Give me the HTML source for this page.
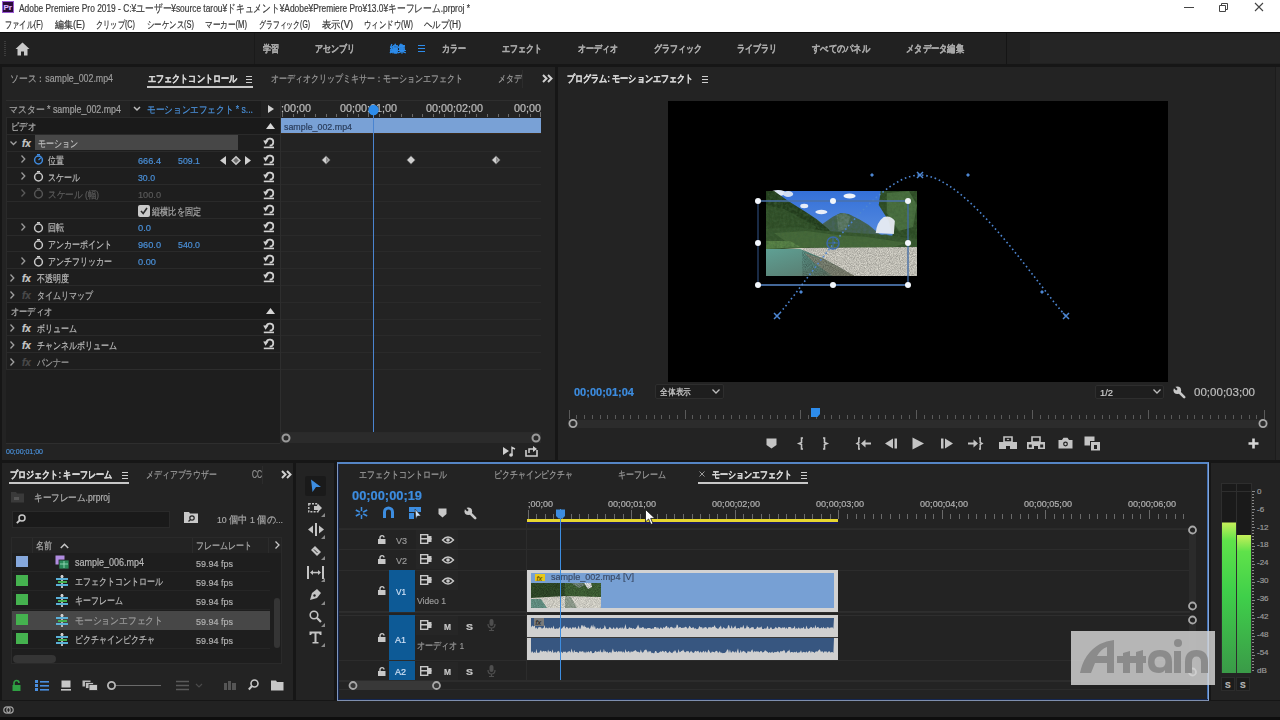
<!DOCTYPE html>
<html><head><meta charset="utf-8">
<style>
*{margin:0;padding:0;box-sizing:border-box}
html,body{width:1280px;height:720px;overflow:hidden;background:#161616;font-family:"Liberation Sans",sans-serif;position:relative}
.a{position:absolute}
.t{position:absolute;white-space:nowrap;line-height:1;transform-origin:0 50%;-webkit-text-stroke:0.2px currentColor}
svg{position:absolute;overflow:visible}
</style></head><body>

<div class="a" style="left:0px;top:0px;width:1280px;height:32px;background:#ffffff;"></div>
<div class="a" style="left:2px;top:1px;width:12px;height:12px;background:#2a0b3a;border:1px solid #9a5ad4"></div>
<div class="t" style="left:3.5px;top:3.7px;font-size:8px;color:#d9b2ff;font-weight:bold;">Pr</div>
<div class="t f" style="left:19px;top:3.0px;font-size:10.5px;color:#3a3a3a;--w:451;transform:scaleX(0.7970);">Adobe Premiere Pro 2019 - C:¥ユーザー¥source tarou¥ドキュメント¥Adobe¥Premiere Pro¥13.0¥キーフレーム.prproj *</div>
<div class="a" style="left:1184px;top:7px;width:10px;height:1px;background:#444;"></div>
<svg style="left:1218px;top:2px" width="11" height="11"><path d="M1.5 3.5H7.5V9.5H1.5Z" stroke="#444" fill="none"/><path d="M3.5 3.5V1.5H9.5V7.5H7.5" stroke="#444" fill="none"/></svg>
<svg style="left:1254px;top:2px" width="10" height="10"><path d="M1 1L9 9M9 1L1 9" stroke="#444" stroke-width="1.1"/></svg>
<div class="t f" style="left:5px;top:19.7px;font-size:10px;color:#333;--w:38;transform:scaleX(0.7200);">ファイル(F)</div>
<div class="t f" style="left:55px;top:19.7px;font-size:10px;color:#333;--w:30;transform:scaleX(0.8997);">編集(E)</div>
<div class="t f" style="left:96px;top:19.7px;font-size:10px;color:#333;--w:39;transform:scaleX(0.7237);">クリップ(C)</div>
<div class="t f" style="left:147px;top:19.7px;font-size:10px;color:#333;--w:47;transform:scaleX(0.7420);">シーケンス(S)</div>
<div class="t f" style="left:205px;top:19.7px;font-size:10px;color:#333;--w:42;transform:scaleX(0.7636);">マーカー(M)</div>
<div class="t f" style="left:259px;top:19.7px;font-size:10px;color:#333;--w:51;transform:scaleX(0.6850);">グラフィック(G)</div>
<div class="t f" style="left:322px;top:19.7px;font-size:10px;color:#333;--w:31;transform:scaleX(0.9297);">表示(V)</div>
<div class="t f" style="left:364px;top:19.7px;font-size:10px;color:#333;--w:49;transform:scaleX(0.7412);">ウィンドウ(W)</div>
<div class="t f" style="left:424px;top:19.7px;font-size:10px;color:#333;--w:37;transform:scaleX(0.8430);">ヘルプ(H)</div>
<div class="a" style="left:0px;top:32px;width:1280px;height:1px;background:#0c0c0c;"></div>
<div class="a" style="left:0px;top:33px;width:1280px;height:31px;background:#212121;"></div>
<div class="a" style="left:0px;top:64px;width:1280px;height:3px;background:#161616;"></div>
<div class="a" style="left:4px;top:41px;width:2px;height:1px;background:#3c3c3c;"></div>
<div class="a" style="left:4px;top:43px;width:2px;height:1px;background:#3c3c3c;"></div>
<div class="a" style="left:4px;top:45px;width:2px;height:1px;background:#3c3c3c;"></div>
<div class="a" style="left:4px;top:47px;width:2px;height:1px;background:#3c3c3c;"></div>
<div class="a" style="left:4px;top:49px;width:2px;height:1px;background:#3c3c3c;"></div>
<div class="a" style="left:4px;top:51px;width:2px;height:1px;background:#3c3c3c;"></div>
<div class="a" style="left:4px;top:53px;width:2px;height:1px;background:#3c3c3c;"></div>
<div class="a" style="left:4px;top:55px;width:2px;height:1px;background:#3c3c3c;"></div>
<svg style="left:15px;top:42px" width="16" height="14"><path d="M7.5 0.5L0.5 7H2.5V13.5H6V9.5H9V13.5H12.5V7H14.5Z" fill="#c9c9c9"/></svg>
<div class="a" style="left:254px;top:33px;width:1px;height:31px;background:#1a1a1a;"></div>
<div class="t f" style="left:263px;top:44.0px;font-size:9.5px;color:#a8a8a8;font-weight:bold;--w:16;transform:scaleX(0.8000);">学習</div>
<div class="t f" style="left:315px;top:44.0px;font-size:9.5px;color:#a8a8a8;font-weight:bold;--w:40;transform:scaleX(0.8000);">アセンブリ</div>
<div class="t f" style="left:390px;top:44.0px;font-size:9.5px;color:#2d8ceb;font-weight:bold;--w:16;transform:scaleX(0.8000);">編集</div>
<div class="t f" style="left:442px;top:44.0px;font-size:9.5px;color:#a8a8a8;font-weight:bold;--w:24;transform:scaleX(0.8000);">カラー</div>
<div class="t f" style="left:502px;top:44.0px;font-size:9.5px;color:#a8a8a8;font-weight:bold;--w:40;transform:scaleX(0.8000);">エフェクト</div>
<div class="t f" style="left:578px;top:44.0px;font-size:9.5px;color:#a8a8a8;font-weight:bold;--w:40;transform:scaleX(0.8000);">オーディオ</div>
<div class="t f" style="left:654px;top:44.0px;font-size:9.5px;color:#a8a8a8;font-weight:bold;--w:48;transform:scaleX(0.8000);">グラフィック</div>
<div class="t f" style="left:737px;top:44.0px;font-size:9.5px;color:#a8a8a8;font-weight:bold;--w:40;transform:scaleX(0.8000);">ライブラリ</div>
<div class="t f" style="left:812px;top:44.0px;font-size:9.5px;color:#a8a8a8;font-weight:bold;--w:58;transform:scaleX(0.8286);">すべてのパネル</div>
<div class="t f" style="left:906px;top:44.0px;font-size:9.5px;color:#a8a8a8;font-weight:bold;--w:58;transform:scaleX(0.8286);">メタデータ編集</div>
<div class="a" style="left:418px;top:44.5px;width:7px;height:1px;background:#2d8ceb;"></div>
<div class="a" style="left:418px;top:47.5px;width:7px;height:1px;background:#2d8ceb;"></div>
<div class="a" style="left:418px;top:50.5px;width:7px;height:1px;background:#2d8ceb;"></div>
<div class="a" style="left:1006px;top:33px;width:1px;height:31px;background:#151515;"></div>
<div class="a" style="left:1030px;top:34px;width:250px;height:29px;background:#252525;"></div>
<div class="a" style="left:2px;top:67px;width:553px;height:393px;background:#232323;"></div>
<div class="a" style="left:558px;top:67px;width:717px;height:393px;background:#232323;"></div>
<div class="a" style="left:1275px;top:67px;width:1px;height:393px;background:#1c1c1c;"></div>
<div class="a" style="left:1276px;top:67px;width:4px;height:393px;background:#262626;"></div>
<div class="a" style="left:2px;top:463px;width:291px;height:237px;background:#232323;"></div>
<div class="a" style="left:296px;top:463px;width:38px;height:237px;background:#232323;"></div>
<div class="a" style="left:337px;top:462px;width:872px;height:239px;background:#232323;border-left:1px solid #7f95bd;border-bottom:1px solid #7f8fae;border-right:1px solid #86a6d6;border-top:2px solid #5585c5;box-shadow:inset 1px -1px 0 #142650, inset -1px 0 0 #3f6fb5"></div>
<div class="a" style="left:1211px;top:463px;width:69px;height:237px;background:#232323;"></div>
<div class="a" style="left:0px;top:701px;width:1280px;height:16px;background:#222222;"></div>
<div class="a" style="left:0px;top:717px;width:1280px;height:3px;background:#0e0e0e;"></div>
<div class="t f" style="left:10px;top:73.7px;font-size:10px;color:#9a9a9a;--w:103;transform:scaleX(0.8825);">ソース：sample_002.mp4</div>
<div class="t f" style="left:148px;top:73.7px;font-size:10px;color:#d6d6d6;font-weight:bold;--w:89;transform:scaleX(0.8091);">エフェクトコントロール</div>
<div class="a" style="left:246px;top:75.5px;width:6px;height:1.2px;background:#cfcfcf;"></div>
<div class="a" style="left:246px;top:78.5px;width:6px;height:1.2px;background:#cfcfcf;"></div>
<div class="a" style="left:246px;top:81.5px;width:6px;height:1.2px;background:#cfcfcf;"></div>
<div class="a" style="left:147px;top:86px;width:106px;height:2px;background:#c8c8c8;"></div>
<div class="t f" style="left:271px;top:73.7px;font-size:10px;color:#9a9a9a;--w:192;transform:scaleX(0.8000);">オーディオクリップミキサー：モーションエフェクト</div>
<div class="t f" style="left:498px;top:73.7px;font-size:10px;color:#9a9a9a;--w:24;transform:scaleX(0.8000);">メタデ</div>
<div class="a" style="left:522px;top:70px;width:1px;height:18px;background:#2c2c2c;"></div>
<svg style="left:542px;top:74px" width="11" height="9"><path d="M1 1L4.5 4.5L1 8M6 1L9.5 4.5L6 8" stroke="#d0d0d0" stroke-width="2" fill="none"/></svg>
<div class="a" style="left:6px;top:100px;width:535px;height:1px;background:#2e2e2e;"></div>
<div class="a" style="left:6px;top:101px;width:274px;height:16px;background:#222222;"></div>
<div class="a" style="left:130px;top:101px;width:131px;height:16px;background:#1c1c1c;"></div>
<div class="t f" style="left:9px;top:104.7px;font-size:10px;color:#a0a0a0;--w:112;transform:scaleX(0.8877);">マスター * sample_002.mp4</div>
<svg style="left:133px;top:106px" width="8" height="6"><path d="M1 1L4 4L7 1" stroke="#bdbdbd" stroke-width="1.5" fill="none"/></svg>
<div class="t f" style="left:147px;top:104.7px;font-size:10px;color:#4a90d9;--w:106;transform:scaleX(0.8632);">モーションエフェクト * s...</div>
<svg style="left:268px;top:105px" width="6" height="8"><path d="M0 0L6 4L0 8Z" fill="#d0d0d0"/></svg>
<div class="a" style="left:6px;top:117px;width:274px;height:326px;background:#1e1e1e;"></div>
<div class="a" style="left:6px;top:117px;width:274px;height:17px;background:#1a1a1a;"></div>
<div class="a" style="left:6px;top:302px;width:274px;height:17px;background:#1a1a1a;"></div>
<div class="a" style="left:6px;top:117px;width:274px;height:1px;background:#2a2a2a;"></div>
<div class="a" style="left:6px;top:134px;width:274px;height:1px;background:#2a2a2a;"></div>
<div class="a" style="left:6px;top:151px;width:274px;height:1px;background:#2a2a2a;"></div>
<div class="a" style="left:6px;top:167px;width:274px;height:1px;background:#2a2a2a;"></div>
<div class="a" style="left:6px;top:184px;width:274px;height:1px;background:#2a2a2a;"></div>
<div class="a" style="left:6px;top:201px;width:274px;height:1px;background:#2a2a2a;"></div>
<div class="a" style="left:6px;top:218px;width:274px;height:1px;background:#2a2a2a;"></div>
<div class="a" style="left:6px;top:235px;width:274px;height:1px;background:#2a2a2a;"></div>
<div class="a" style="left:6px;top:251px;width:274px;height:1px;background:#2a2a2a;"></div>
<div class="a" style="left:6px;top:268px;width:274px;height:1px;background:#2a2a2a;"></div>
<div class="a" style="left:6px;top:285px;width:274px;height:1px;background:#2a2a2a;"></div>
<div class="a" style="left:6px;top:302px;width:274px;height:1px;background:#2a2a2a;"></div>
<div class="a" style="left:6px;top:319px;width:274px;height:1px;background:#2a2a2a;"></div>
<div class="a" style="left:6px;top:335px;width:274px;height:1px;background:#2a2a2a;"></div>
<div class="a" style="left:6px;top:352px;width:274px;height:1px;background:#2a2a2a;"></div>
<div class="a" style="left:6px;top:369px;width:274px;height:1px;background:#2a2a2a;"></div>
<div class="a" style="left:6px;top:117px;width:1px;height:326px;background:#2a2a2a;"></div>
<div class="t f" style="left:11px;top:122.0px;font-size:9.5px;color:#b5b5b5;--w:25;transform:scaleX(0.8333);">ビデオ</div>
<svg style="left:266px;top:123px" width="9" height="6"><path d="M0 6L4.5 0L9 6Z" fill="#d6d6d6"/></svg>
<div class="t f" style="left:11px;top:306.9px;font-size:9.5px;color:#b5b5b5;--w:41;transform:scaleX(0.8200);">オーディオ</div>
<svg style="left:266px;top:308px" width="9" height="6"><path d="M0 6L4.5 0L9 6Z" fill="#d6d6d6"/></svg>
<svg style="left:10px;top:141px" width="7" height="5"><path d="M0.5 0.5L3.5 3.5L6.5 0.5" stroke="#a0a0a0" stroke-width="1.3" fill="none"/></svg>
<div class="t" style="left:22px;top:138.7px;font-size:10px;color:#c8c8c8;font-weight:bold;font-family:"Liberation Serif",serif;letter-spacing:-0.5px"><i>fx</i></div>
<div class="a" style="left:35px;top:135px;width:203px;height:15px;background:#474747;"></div>
<div class="t f" style="left:38px;top:138.9px;font-size:9.5px;color:#bdbdbd;--w:40;transform:scaleX(0.8000);">モーション</div>
<svg style="left:263px;top:137px" width="12" height="12"><path d="M3.4 4.2A3.5 3.5 0 1 1 6.6 8.6" stroke="#d0d0d0" stroke-width="1.7" fill="none"/><path d="M0.2 3.6L5.6 3.2L2.6 7.8Z" fill="#d0d0d0"/><rect x="0.8" y="9.6" width="10.2" height="1.6" fill="#d0d0d0"/></svg>
<svg style="left:21px;top:155px" width="5" height="8"><path d="M0.5 0.5L3.8 4L0.5 7.5" stroke="#9a9a9a" stroke-width="1.3" fill="none"/></svg>
<svg style="left:33px;top:154px" width="11" height="11"><circle cx="5.5" cy="6" r="3.9" stroke="#3f8be0" stroke-width="1.5" fill="none"/><rect x="4" y="0" width="3" height="1.4" fill="#3f8be0"/><path d="M5.5 6L8 3.6" stroke="#3f8be0" stroke-width="1.3"/></svg>
<div class="t f" style="left:48px;top:155.9px;font-size:9.5px;color:#bdbdbd;--w:16;transform:scaleX(0.8000);">位置</div>
<div class="t f" style="left:138px;top:155.9px;font-size:9.5px;color:#4a90d9;--w:23;transform:scaleX(0.9671);">666.4</div>
<div class="t f" style="left:178px;top:155.9px;font-size:9.5px;color:#4a90d9;--w:22;transform:scaleX(0.9251);">509.1</div>
<svg style="left:220px;top:156px" width="32" height="9"><path d="M6 0L0 4.5L6 9Z" fill="#cfcfcf"/><path d="M16 0.8L19.8 4.5L16 8.2L12.2 4.5Z" fill="#6a6a6a" stroke="#c8c8c8" stroke-width="1.6"/><path d="M25 0L31 4.5L25 9Z" fill="#cfcfcf"/></svg>
<svg style="left:263px;top:154px" width="12" height="12"><path d="M3.4 4.2A3.5 3.5 0 1 1 6.6 8.6" stroke="#d0d0d0" stroke-width="1.7" fill="none"/><path d="M0.2 3.6L5.6 3.2L2.6 7.8Z" fill="#d0d0d0"/><rect x="0.8" y="9.6" width="10.2" height="1.6" fill="#d0d0d0"/></svg>
<svg style="left:21px;top:172px" width="5" height="8"><path d="M0.5 0.5L3.8 4L0.5 7.5" stroke="#9a9a9a" stroke-width="1.3" fill="none"/></svg>
<svg style="left:33px;top:171px" width="11" height="11"><circle cx="5.5" cy="6" r="3.9" stroke="#c8c8c8" stroke-width="1.5" fill="none"/><rect x="4" y="0" width="3" height="1.4" fill="#c8c8c8"/></svg>
<div class="t f" style="left:48px;top:172.9px;font-size:9.5px;color:#bdbdbd;--w:32;transform:scaleX(0.8000);">スケール</div>
<div class="t f" style="left:138px;top:172.9px;font-size:9.5px;color:#4a90d9;--w:17;transform:scaleX(0.9189);">30.0</div>
<svg style="left:263px;top:171px" width="12" height="12"><path d="M3.4 4.2A3.5 3.5 0 1 1 6.6 8.6" stroke="#d0d0d0" stroke-width="1.7" fill="none"/><path d="M0.2 3.6L5.6 3.2L2.6 7.8Z" fill="#d0d0d0"/><rect x="0.8" y="9.6" width="10.2" height="1.6" fill="#d0d0d0"/></svg>
<svg style="left:21px;top:189px" width="5" height="8"><path d="M0.5 0.5L3.8 4L0.5 7.5" stroke="#5a5a5a" stroke-width="1.3" fill="none"/></svg>
<svg style="left:33px;top:188px" width="11" height="11"><circle cx="5.5" cy="6" r="3.9" stroke="#555" stroke-width="1.5" fill="none"/><rect x="4" y="0" width="3" height="1.4" fill="#555"/></svg>
<div class="t f" style="left:48px;top:189.9px;font-size:9.5px;color:#5c5c5c;--w:51;transform:scaleX(0.8649);">スケール (幅)</div>
<div class="t f" style="left:138px;top:189.9px;font-size:9.5px;color:#5a5a5a;--w:23;transform:scaleX(0.9671);">100.0</div>
<svg style="left:263px;top:188px" width="12" height="12"><path d="M3.4 4.2A3.5 3.5 0 1 1 6.6 8.6" stroke="#d0d0d0" stroke-width="1.7" fill="none"/><path d="M0.2 3.6L5.6 3.2L2.6 7.8Z" fill="#d0d0d0"/><rect x="0.8" y="9.6" width="10.2" height="1.6" fill="#d0d0d0"/></svg>
<div class="a" style="left:138px;top:205px;width:12px;height:12px;background:#c9c9c9;border-radius:2px"></div>
<svg style="left:140px;top:207px" width="8" height="8"><path d="M1 4L3.2 6.5L7 1" stroke="#2a2a2a" stroke-width="1.6" fill="none"/></svg>
<div class="t f" style="left:152px;top:206.9px;font-size:9.5px;color:#a8a8a8;--w:49;transform:scaleX(0.8167);">縦横比を固定</div>
<svg style="left:263px;top:204px" width="12" height="12"><path d="M3.4 4.2A3.5 3.5 0 1 1 6.6 8.6" stroke="#d0d0d0" stroke-width="1.7" fill="none"/><path d="M0.2 3.6L5.6 3.2L2.6 7.8Z" fill="#d0d0d0"/><rect x="0.8" y="9.6" width="10.2" height="1.6" fill="#d0d0d0"/></svg>
<svg style="left:21px;top:223px" width="5" height="8"><path d="M0.5 0.5L3.8 4L0.5 7.5" stroke="#9a9a9a" stroke-width="1.3" fill="none"/></svg>
<svg style="left:33px;top:222px" width="11" height="11"><circle cx="5.5" cy="6" r="3.9" stroke="#c8c8c8" stroke-width="1.5" fill="none"/><rect x="4" y="0" width="3" height="1.4" fill="#c8c8c8"/></svg>
<div class="t f" style="left:48px;top:222.9px;font-size:9.5px;color:#bdbdbd;--w:16;transform:scaleX(0.8000);">回転</div>
<div class="t f" style="left:138px;top:222.9px;font-size:9.5px;color:#4a90d9;--w:13;transform:scaleX(0.9835);">0.0</div>
<svg style="left:263px;top:221px" width="12" height="12"><path d="M3.4 4.2A3.5 3.5 0 1 1 6.6 8.6" stroke="#d0d0d0" stroke-width="1.7" fill="none"/><path d="M0.2 3.6L5.6 3.2L2.6 7.8Z" fill="#d0d0d0"/><rect x="0.8" y="9.6" width="10.2" height="1.6" fill="#d0d0d0"/></svg>
<svg style="left:33px;top:239px" width="11" height="11"><circle cx="5.5" cy="6" r="3.9" stroke="#c8c8c8" stroke-width="1.5" fill="none"/><rect x="4" y="0" width="3" height="1.4" fill="#c8c8c8"/></svg>
<div class="t f" style="left:48px;top:239.9px;font-size:9.5px;color:#bdbdbd;--w:64;transform:scaleX(0.8000);">アンカーポイント</div>
<div class="t f" style="left:138px;top:239.9px;font-size:9.5px;color:#4a90d9;--w:23;transform:scaleX(0.9671);">960.0</div>
<div class="t f" style="left:178px;top:239.9px;font-size:9.5px;color:#4a90d9;--w:22;transform:scaleX(0.9251);">540.0</div>
<svg style="left:263px;top:238px" width="12" height="12"><path d="M3.4 4.2A3.5 3.5 0 1 1 6.6 8.6" stroke="#d0d0d0" stroke-width="1.7" fill="none"/><path d="M0.2 3.6L5.6 3.2L2.6 7.8Z" fill="#d0d0d0"/><rect x="0.8" y="9.6" width="10.2" height="1.6" fill="#d0d0d0"/></svg>
<svg style="left:21px;top:257px" width="5" height="8"><path d="M0.5 0.5L3.8 4L0.5 7.5" stroke="#9a9a9a" stroke-width="1.3" fill="none"/></svg>
<svg style="left:33px;top:256px" width="11" height="11"><circle cx="5.5" cy="6" r="3.9" stroke="#c8c8c8" stroke-width="1.5" fill="none"/><rect x="4" y="0" width="3" height="1.4" fill="#c8c8c8"/></svg>
<div class="t f" style="left:48px;top:256.9px;font-size:9.5px;color:#bdbdbd;--w:64;transform:scaleX(0.8000);">アンチフリッカー</div>
<div class="t f" style="left:138px;top:256.9px;font-size:9.5px;color:#4a90d9;--w:18;transform:scaleX(0.9730);">0.00</div>
<svg style="left:263px;top:254px" width="12" height="12"><path d="M3.4 4.2A3.5 3.5 0 1 1 6.6 8.6" stroke="#d0d0d0" stroke-width="1.7" fill="none"/><path d="M0.2 3.6L5.6 3.2L2.6 7.8Z" fill="#d0d0d0"/><rect x="0.8" y="9.6" width="10.2" height="1.6" fill="#d0d0d0"/></svg>
<svg style="left:10px;top:274px" width="5" height="8"><path d="M0.5 0.5L3.8 4L0.5 7.5" stroke="#a0a0a0" stroke-width="1.3" fill="none"/></svg>
<div class="t" style="left:22px;top:273.7px;font-size:10px;color:#c8c8c8;font-weight:bold;font-family:"Liberation Serif",serif;letter-spacing:-0.5px"><i>fx</i></div>
<div class="t f" style="left:37px;top:273.9px;font-size:9.5px;color:#bdbdbd;--w:32;transform:scaleX(0.8000);">不透明度</div>
<svg style="left:263px;top:271px" width="12" height="12"><path d="M3.4 4.2A3.5 3.5 0 1 1 6.6 8.6" stroke="#d0d0d0" stroke-width="1.7" fill="none"/><path d="M0.2 3.6L5.6 3.2L2.6 7.8Z" fill="#d0d0d0"/><rect x="0.8" y="9.6" width="10.2" height="1.6" fill="#d0d0d0"/></svg>
<svg style="left:10px;top:291px" width="5" height="8"><path d="M0.5 0.5L3.8 4L0.5 7.5" stroke="#a0a0a0" stroke-width="1.3" fill="none"/></svg>
<div class="t" style="left:22px;top:290.7px;font-size:10px;color:#4a4a4a;font-weight:bold;font-family:"Liberation Serif",serif;letter-spacing:-0.5px"><i>fx</i></div>
<div class="t f" style="left:37px;top:290.9px;font-size:9.5px;color:#b0b0b0;--w:56;transform:scaleX(0.8000);">タイムリマップ</div>
<svg style="left:10px;top:324px" width="5" height="8"><path d="M0.5 0.5L3.8 4L0.5 7.5" stroke="#a0a0a0" stroke-width="1.3" fill="none"/></svg>
<div class="t" style="left:22px;top:323.7px;font-size:10px;color:#c8c8c8;font-weight:bold;font-family:"Liberation Serif",serif;letter-spacing:-0.5px"><i>fx</i></div>
<div class="t f" style="left:37px;top:323.9px;font-size:9.5px;color:#bdbdbd;--w:40;transform:scaleX(0.8000);">ボリューム</div>
<svg style="left:263px;top:322px" width="12" height="12"><path d="M3.4 4.2A3.5 3.5 0 1 1 6.6 8.6" stroke="#d0d0d0" stroke-width="1.7" fill="none"/><path d="M0.2 3.6L5.6 3.2L2.6 7.8Z" fill="#d0d0d0"/><rect x="0.8" y="9.6" width="10.2" height="1.6" fill="#d0d0d0"/></svg>
<svg style="left:10px;top:341px" width="5" height="8"><path d="M0.5 0.5L3.8 4L0.5 7.5" stroke="#a0a0a0" stroke-width="1.3" fill="none"/></svg>
<div class="t" style="left:22px;top:340.7px;font-size:10px;color:#c8c8c8;font-weight:bold;font-family:"Liberation Serif",serif;letter-spacing:-0.5px"><i>fx</i></div>
<div class="t f" style="left:37px;top:340.9px;font-size:9.5px;color:#bdbdbd;--w:80;transform:scaleX(0.8000);">チャンネルボリューム</div>
<svg style="left:263px;top:338px" width="12" height="12"><path d="M3.4 4.2A3.5 3.5 0 1 1 6.6 8.6" stroke="#d0d0d0" stroke-width="1.7" fill="none"/><path d="M0.2 3.6L5.6 3.2L2.6 7.8Z" fill="#d0d0d0"/><rect x="0.8" y="9.6" width="10.2" height="1.6" fill="#d0d0d0"/></svg>
<svg style="left:10px;top:358px" width="5" height="8"><path d="M0.5 0.5L3.8 4L0.5 7.5" stroke="#a0a0a0" stroke-width="1.3" fill="none"/></svg>
<div class="t" style="left:22px;top:357.7px;font-size:10px;color:#4a4a4a;font-weight:bold;font-family:"Liberation Serif",serif;letter-spacing:-0.5px"><i>fx</i></div>
<div class="t f" style="left:37px;top:357.9px;font-size:9.5px;color:#9a9a9a;--w:32;transform:scaleX(0.8000);">パンナー</div>
<div class="a" style="left:22px;top:369px;width:258px;height:1px;background:#2d2d2d;"></div>
<div class="a" style="left:6px;top:370px;width:274px;height:73px;background:#1e1e1e;"></div>
<div class="a" style="left:6px;top:443px;width:274px;height:1px;background:#2e2e2e;"></div>
<div class="a" style="left:280px;top:432px;width:261px;height:1px;background:#2a2a2a;"></div>
<div class="a" style="left:280px;top:101px;width:261px;height:331px;background:#232323;"></div>
<div class="a" style="left:280px;top:101px;width:1px;height:342px;background:#2e2e2e;"></div>
<div class="t f" style="left:281px;top:103.7px;font-size:10px;color:#bdbdbd;--w:30;transform:scaleX(1.0787);">;00;00</div>
<div class="t f" style="left:340px;top:103.7px;font-size:10px;color:#bdbdbd;--w:57;transform:scaleX(1.0790);">00;00;01;00</div>
<div class="t f" style="left:426px;top:103.7px;font-size:10px;color:#bdbdbd;--w:57;transform:scaleX(1.0790);">00;00;02;00</div>
<div class="t f" style="left:514px;top:103.7px;font-size:10px;color:#bdbdbd;--w:27;transform:scaleX(1.0787);">00;00</div>
<div class="a" style="left:282px;top:112px;width:1px;height:5px;background:#6a6a6a;"></div>
<div class="a" style="left:293px;top:114px;width:1px;height:3px;background:#6a6a6a;"></div>
<div class="a" style="left:304px;top:114px;width:1px;height:3px;background:#6a6a6a;"></div>
<div class="a" style="left:315px;top:114px;width:1px;height:3px;background:#6a6a6a;"></div>
<div class="a" style="left:326px;top:114px;width:1px;height:3px;background:#6a6a6a;"></div>
<div class="a" style="left:336px;top:114px;width:1px;height:3px;background:#6a6a6a;"></div>
<div class="a" style="left:347px;top:114px;width:1px;height:3px;background:#6a6a6a;"></div>
<div class="a" style="left:358px;top:114px;width:1px;height:3px;background:#6a6a6a;"></div>
<div class="a" style="left:368px;top:112px;width:1px;height:5px;background:#6a6a6a;"></div>
<div class="a" style="left:379px;top:114px;width:1px;height:3px;background:#6a6a6a;"></div>
<div class="a" style="left:390px;top:114px;width:1px;height:3px;background:#6a6a6a;"></div>
<div class="a" style="left:401px;top:114px;width:1px;height:3px;background:#6a6a6a;"></div>
<div class="a" style="left:412px;top:114px;width:1px;height:3px;background:#6a6a6a;"></div>
<div class="a" style="left:422px;top:114px;width:1px;height:3px;background:#6a6a6a;"></div>
<div class="a" style="left:433px;top:114px;width:1px;height:3px;background:#6a6a6a;"></div>
<div class="a" style="left:444px;top:114px;width:1px;height:3px;background:#6a6a6a;"></div>
<div class="a" style="left:454px;top:112px;width:1px;height:5px;background:#6a6a6a;"></div>
<div class="a" style="left:465px;top:114px;width:1px;height:3px;background:#6a6a6a;"></div>
<div class="a" style="left:476px;top:114px;width:1px;height:3px;background:#6a6a6a;"></div>
<div class="a" style="left:487px;top:114px;width:1px;height:3px;background:#6a6a6a;"></div>
<div class="a" style="left:498px;top:114px;width:1px;height:3px;background:#6a6a6a;"></div>
<div class="a" style="left:508px;top:114px;width:1px;height:3px;background:#6a6a6a;"></div>
<div class="a" style="left:519px;top:114px;width:1px;height:3px;background:#6a6a6a;"></div>
<div class="a" style="left:530px;top:114px;width:1px;height:3px;background:#6a6a6a;"></div>
<div class="a" style="left:540px;top:112px;width:1px;height:5px;background:#6a6a6a;"></div>
<div class="a" style="left:281px;top:118px;width:260px;height:16px;background:#79a1d6;"></div>
<div class="a" style="left:281px;top:133px;width:260px;height:1px;background:#3a2a1a;"></div>
<div class="t f" style="left:284px;top:122.0px;font-size:9.5px;color:#2a3d5c;--w:68;transform:scaleX(0.9329);">sample_002.mp4</div>
<div class="a" style="left:281px;top:151px;width:260px;height:1px;background:#2a2a2a;"></div>
<div class="a" style="left:281px;top:167px;width:260px;height:1px;background:#2a2a2a;"></div>
<div class="a" style="left:281px;top:184px;width:260px;height:1px;background:#2a2a2a;"></div>
<div class="a" style="left:281px;top:201px;width:260px;height:1px;background:#2a2a2a;"></div>
<div class="a" style="left:281px;top:218px;width:260px;height:1px;background:#2a2a2a;"></div>
<div class="a" style="left:281px;top:235px;width:260px;height:1px;background:#2a2a2a;"></div>
<div class="a" style="left:281px;top:251px;width:260px;height:1px;background:#2a2a2a;"></div>
<div class="a" style="left:281px;top:268px;width:260px;height:1px;background:#2a2a2a;"></div>
<div class="a" style="left:281px;top:285px;width:260px;height:1px;background:#2a2a2a;"></div>
<div class="a" style="left:281px;top:302px;width:260px;height:1px;background:#2a2a2a;"></div>
<div class="a" style="left:281px;top:319px;width:260px;height:1px;background:#2a2a2a;"></div>
<div class="a" style="left:281px;top:335px;width:260px;height:1px;background:#2a2a2a;"></div>
<div class="a" style="left:281px;top:352px;width:260px;height:1px;background:#2a2a2a;"></div>
<div class="a" style="left:281px;top:369px;width:260px;height:1px;background:#2a2a2a;"></div>
<svg style="left:321px;top:155px" width="10" height="10"><path d="M5 0.5L9.5 5L5 9.5L0.5 5Z" fill="#cfcfcf" stroke="#1a1a1a" stroke-width="0.8"/><path d="M5 2L5 8L8 5Z" fill="#8a8a8a"/></svg>
<svg style="left:406px;top:155px" width="10" height="10"><path d="M5 0.5L9.5 5L5 9.5L0.5 5Z" fill="#cfcfcf" stroke="#1a1a1a" stroke-width="0.8"/></svg>
<svg style="left:491px;top:155px" width="10" height="10"><path d="M5 0.5L9.5 5L5 9.5L0.5 5Z" fill="#cfcfcf" stroke="#1a1a1a" stroke-width="0.8"/><path d="M5 2L5 8L8 5Z" fill="#8a8a8a"/></svg>
<div class="a" style="left:373px;top:112px;width:1px;height:320px;background:#4a84d0;"></div>
<svg style="left:367px;top:104px" width="13" height="12"><circle cx="6.5" cy="6" r="5.2" fill="#2d8ceb"/></svg>
<div class="a" style="left:280px;top:433px;width:261px;height:10px;background:#2b2b2b;"></div>
<svg style="left:281px;top:433px" width="260" height="11"><circle cx="5" cy="5" r="3.5" stroke="#9a9a9a" stroke-width="2" fill="none"/><circle cx="255" cy="5" r="3.5" stroke="#9a9a9a" stroke-width="2" fill="none"/></svg>
<div class="t f" style="left:6px;top:447.7px;font-size:8px;color:#4a90d9;--w:37;transform:scaleX(0.8754);">00;00;01;00</div>
<svg style="left:503px;top:446px" width="14" height="11"><path d="M0 1L6 5L0 9Z" fill="#cfcfcf"/><path d="M9 9.5V1.5L12 3" stroke="#cfcfcf" stroke-width="1.4" fill="none"/><circle cx="8" cy="9" r="1.8" fill="#cfcfcf"/></svg>
<svg style="left:525px;top:445px" width="13" height="12"><path d="M1 5V11H12V5" stroke="#cfcfcf" stroke-width="1.6" fill="none"/><path d="M4 8V4H9" stroke="#cfcfcf" stroke-width="1.5" fill="none"/><path d="M8 1L12 4L8 7Z" fill="#cfcfcf"/></svg>
<div class="t f" style="left:567px;top:73.7px;font-size:10px;color:#d6d6d6;font-weight:bold;--w:126;transform:scaleX(0.8071);">プログラム: モーションエフェクト</div>
<div class="a" style="left:702px;top:75.5px;width:6px;height:1.2px;background:#cfcfcf;"></div>
<div class="a" style="left:702px;top:78.5px;width:6px;height:1.2px;background:#cfcfcf;"></div>
<div class="a" style="left:702px;top:81.5px;width:6px;height:1.2px;background:#cfcfcf;"></div>
<div class="a" style="left:668px;top:101px;width:500px;height:281px;background:#000000;"></div>
<svg style="left:766px;top:191px" width="151" height="85" viewBox="0 0 150 85" preserveAspectRatio="none">
<defs>
<linearGradient id="sky" x1="0" y1="0" x2="0" y2="1"><stop offset="0" stop-color="#3470d8"/><stop offset="0.6" stop-color="#5a8ee0"/><stop offset="1" stop-color="#9ab8e6"/></linearGradient>
<linearGradient id="riv" x1="0" y1="0" x2="1" y2="1"><stop offset="0" stop-color="#5fa094"/><stop offset="0.6" stop-color="#5a8478"/><stop offset="1" stop-color="#6a6e5c"/></linearGradient>
<filter id="nz" x="0" y="0" width="1" height="1"><feTurbulence type="fractalNoise" baseFrequency="1.1" numOctaves="2" seed="3"/><feColorMatrix type="matrix" values="0 0 0 0 0  0 0 0 0 0  0 0 0 0 0  0 0 0 1.2 -0.3"/><feComposite in2="SourceGraphic" operator="in"/></filter>
<filter id="nz2" x="0" y="0" width="1" height="1"><feTurbulence type="fractalNoise" baseFrequency="0.35" numOctaves="2" seed="9"/><feColorMatrix type="matrix" values="0 0 0 0 0.05  0 0 0 0 0.12  0 0 0 0 0.04  0 0 0 1.4 -0.45"/><feComposite in2="SourceGraphic" operator="in"/></filter>
</defs>
<rect width="150" height="85" fill="url(#sky)"/>
<ellipse cx="12" cy="2" rx="8" ry="3" fill="#dfe8f6"/><ellipse cx="22" cy="3" rx="5" ry="3" fill="#d0ddf2"/>
<ellipse cx="83" cy="5" rx="6" ry="2.6" fill="#eef3fb"/>
<ellipse cx="38" cy="15" rx="4" ry="2.2" fill="#e6ecf7"/><ellipse cx="55" cy="21" rx="6" ry="2.2" fill="#e9eef8"/>
<path d="M56 33 L66 26 L74 22 L82 23 L92 28 L102 34 L114 44 L60 48Z" fill="#45625a"/>
<path d="M70 24 L78 22 L84 26 L80 38 L72 40Z" fill="#5f7a6c"/>
<path d="M0 0 L8 0 L22 10 L38 20 L50 28 L62 38 L70 48 L0 52Z" fill="#223c1c"/>
<path d="M0 14 L18 18 L36 28 L50 36 L40 52 L0 54Z" fill="#2e4c26"/>
<path d="M114 0 L150 0 L150 64 L110 60 L126 44 L122 30 L112 14Z" fill="#2c4a24"/>
<path d="M120 2 L142 0 L150 14 L146 36 L132 40 L120 22Z" fill="#4a7040"/>
<path d="M0 38 L30 36 L60 40 L90 42 L120 44 L150 48 L150 60 L0 60Z" fill="#34542c"/>
<path d="M8 42 L40 40 L70 44 L100 46 L140 52 L120 58 L30 58Z" fill="#46693a"/>
<path d="M0 50 L24 50 L34 56 L0 58Z" fill="#5a8448"/>
<clipPath id="fc"><path d="M0 0 L8 0 L22 10 L38 20 L50 28 L58 34 L66 26 L74 22 L82 23 L92 28 L102 34 L110 44 L124 42 L122 30 L112 14 L114 0 L150 0 L150 60 L0 60Z"/></clipPath><rect x="0" y="0" width="150" height="60" fill="#000" filter="url(#nz2)" opacity="0.9" clip-path="url(#fc)"/>
<path d="M109 42 Q110 31 117 26 Q124 24 128 30 L127 43Z" fill="#e8ecf2" opacity="0.95"/>
<path d="M0 59 L36 57 L150 56 L150 85 L0 85Z" fill="#d8d6cc"/>
<path d="M0 58 L34 58 L58 68 L88 85 L0 85Z" fill="url(#riv)"/>
<path d="M38 62 L58 68 L88 85 L66 85 L48 72Z" fill="#8a8a78" opacity="0.8"/>
<rect x="36" y="56" width="114" height="29" fill="#6a6a60" filter="url(#nz)" opacity="0.4"/>
</svg>
<svg style="left:668px;top:101px" width="500" height="281" viewBox="668 101 500 281">
<path d="M777 316 C801 292 872 175 920 175 C968 175 1042 292 1066 316" stroke="#4d86d2" stroke-width="1.6" fill="none" stroke-dasharray="1.6 2.8"/>
<path d="M758 201H908" stroke="#4a72aa" stroke-width="1.3"/>
<path d="M908 201V285" stroke="#3f6aa6" stroke-width="1.3"/>
<path d="M758 285H908" stroke="#5a8acb" stroke-width="1.5"/>
<path d="M758 201V285" stroke="#22395c" stroke-width="1.5"/>
<circle cx="833" cy="243" r="6" stroke="#3a68a8" stroke-width="1.5" fill="none"/>
<path d="M827 243H839M833 237V249" stroke="#3a68a8" stroke-width="1"/>
<g fill="#f2f6fb">
<circle cx="758" cy="201" r="3"/><circle cx="833" cy="201" r="3"/><circle cx="908" cy="201" r="3"/>
<circle cx="758" cy="243" r="3"/><circle cx="908" cy="243" r="3"/>
<circle cx="758" cy="285" r="3"/><circle cx="833" cy="285" r="3"/><circle cx="908" cy="285" r="3"/>
</g>
<g fill="#4d86d2">
<path d="M872 173L874 175L872 177L870 175Z"/><path d="M968 173L970 175L968 177L966 175Z"/>
<path d="M801 290L803 292L801 294L799 292Z"/><path d="M1042 290L1044 292L1042 294L1040 292Z"/>
</g>
<g stroke="#4d86d2" stroke-width="1.5"><path d="M774 313L780 319M780 313L774 319"/><path d="M1063 313L1069 319M1069 313L1063 319"/><path d="M917 172L923 178M923 172L917 178"/></g>
</svg>
<div class="t f" style="left:574px;top:387.2px;font-size:11px;color:#3d8de0;font-weight:bold;--w:60;transform:scaleX(1.0010);">00;00;01;04</div>
<div class="a" style="left:655px;top:384px;width:69px;height:15px;background:#1e1e1e;border:1px solid #2e2e2e;border-radius:2px"></div>
<div class="t f" style="left:660px;top:388.2px;font-size:9px;color:#d0d0d0;--w:31;transform:scaleX(0.8611);">全体表示</div>
<svg style="left:712px;top:389px" width="8" height="5"><path d="M0.5 0.5L4 4L7.5 0.5" stroke="#bdbdbd" stroke-width="1.3" fill="none"/></svg>
<div class="a" style="left:1095px;top:385px;width:69px;height:14px;background:#1e1e1e;border:1px solid #2e2e2e;border-radius:2px"></div>
<div class="t f" style="left:1100px;top:387.9px;font-size:9.5px;color:#d0d0d0;--w:13;transform:scaleX(0.9835);">1/2</div>
<svg style="left:1153px;top:389px" width="8" height="5"><path d="M0.5 0.5L4 4L7.5 0.5" stroke="#bdbdbd" stroke-width="1.3" fill="none"/></svg>
<svg style="left:1173px;top:386px" width="13" height="13"><path d="M6 6L11.2 11.2" stroke="#c8c8c8" stroke-width="2.6" stroke-linecap="round"/><circle cx="4.3" cy="4.3" r="3.8" fill="#c8c8c8"/><path d="M0 1.2L3.2 4.4L4.6 3L1.4 -0.2Z" fill="#232323"/></svg>
<div class="t f" style="left:1194px;top:387.2px;font-size:11px;color:#bdbdbd;--w:61;transform:scaleX(1.0495);">00;00;03;00</div>
<div class="a" style="left:569px;top:410px;width:1px;height:9px;background:#5a5a5a;"></div>
<div class="a" style="left:576px;top:415px;width:1px;height:4px;background:#5a5a5a;"></div>
<div class="a" style="left:584px;top:415px;width:1px;height:4px;background:#5a5a5a;"></div>
<div class="a" style="left:592px;top:415px;width:1px;height:4px;background:#5a5a5a;"></div>
<div class="a" style="left:600px;top:415px;width:1px;height:4px;background:#5a5a5a;"></div>
<div class="a" style="left:607px;top:415px;width:1px;height:4px;background:#5a5a5a;"></div>
<div class="a" style="left:615px;top:415px;width:1px;height:4px;background:#5a5a5a;"></div>
<div class="a" style="left:623px;top:415px;width:1px;height:4px;background:#5a5a5a;"></div>
<div class="a" style="left:630px;top:415px;width:1px;height:4px;background:#5a5a5a;"></div>
<div class="a" style="left:638px;top:415px;width:1px;height:4px;background:#5a5a5a;"></div>
<div class="a" style="left:646px;top:415px;width:1px;height:4px;background:#5a5a5a;"></div>
<div class="a" style="left:654px;top:415px;width:1px;height:4px;background:#5a5a5a;"></div>
<div class="a" style="left:661px;top:415px;width:1px;height:4px;background:#5a5a5a;"></div>
<div class="a" style="left:669px;top:415px;width:1px;height:4px;background:#5a5a5a;"></div>
<div class="a" style="left:677px;top:415px;width:1px;height:4px;background:#5a5a5a;"></div>
<div class="a" style="left:685px;top:410px;width:1px;height:9px;background:#5a5a5a;"></div>
<div class="a" style="left:692px;top:415px;width:1px;height:4px;background:#5a5a5a;"></div>
<div class="a" style="left:700px;top:415px;width:1px;height:4px;background:#5a5a5a;"></div>
<div class="a" style="left:708px;top:415px;width:1px;height:4px;background:#5a5a5a;"></div>
<div class="a" style="left:715px;top:415px;width:1px;height:4px;background:#5a5a5a;"></div>
<div class="a" style="left:723px;top:415px;width:1px;height:4px;background:#5a5a5a;"></div>
<div class="a" style="left:731px;top:415px;width:1px;height:4px;background:#5a5a5a;"></div>
<div class="a" style="left:739px;top:415px;width:1px;height:4px;background:#5a5a5a;"></div>
<div class="a" style="left:746px;top:415px;width:1px;height:4px;background:#5a5a5a;"></div>
<div class="a" style="left:754px;top:415px;width:1px;height:4px;background:#5a5a5a;"></div>
<div class="a" style="left:762px;top:415px;width:1px;height:4px;background:#5a5a5a;"></div>
<div class="a" style="left:770px;top:415px;width:1px;height:4px;background:#5a5a5a;"></div>
<div class="a" style="left:777px;top:415px;width:1px;height:4px;background:#5a5a5a;"></div>
<div class="a" style="left:785px;top:415px;width:1px;height:4px;background:#5a5a5a;"></div>
<div class="a" style="left:793px;top:415px;width:1px;height:4px;background:#5a5a5a;"></div>
<div class="a" style="left:800px;top:410px;width:1px;height:9px;background:#5a5a5a;"></div>
<div class="a" style="left:808px;top:415px;width:1px;height:4px;background:#5a5a5a;"></div>
<div class="a" style="left:816px;top:415px;width:1px;height:4px;background:#5a5a5a;"></div>
<div class="a" style="left:824px;top:415px;width:1px;height:4px;background:#5a5a5a;"></div>
<div class="a" style="left:831px;top:415px;width:1px;height:4px;background:#5a5a5a;"></div>
<div class="a" style="left:839px;top:415px;width:1px;height:4px;background:#5a5a5a;"></div>
<div class="a" style="left:847px;top:415px;width:1px;height:4px;background:#5a5a5a;"></div>
<div class="a" style="left:854px;top:415px;width:1px;height:4px;background:#5a5a5a;"></div>
<div class="a" style="left:862px;top:415px;width:1px;height:4px;background:#5a5a5a;"></div>
<div class="a" style="left:870px;top:415px;width:1px;height:4px;background:#5a5a5a;"></div>
<div class="a" style="left:878px;top:415px;width:1px;height:4px;background:#5a5a5a;"></div>
<div class="a" style="left:885px;top:415px;width:1px;height:4px;background:#5a5a5a;"></div>
<div class="a" style="left:893px;top:415px;width:1px;height:4px;background:#5a5a5a;"></div>
<div class="a" style="left:901px;top:415px;width:1px;height:4px;background:#5a5a5a;"></div>
<div class="a" style="left:909px;top:415px;width:1px;height:4px;background:#5a5a5a;"></div>
<div class="a" style="left:916px;top:410px;width:1px;height:9px;background:#5a5a5a;"></div>
<div class="a" style="left:924px;top:415px;width:1px;height:4px;background:#5a5a5a;"></div>
<div class="a" style="left:932px;top:415px;width:1px;height:4px;background:#5a5a5a;"></div>
<div class="a" style="left:939px;top:415px;width:1px;height:4px;background:#5a5a5a;"></div>
<div class="a" style="left:947px;top:415px;width:1px;height:4px;background:#5a5a5a;"></div>
<div class="a" style="left:955px;top:415px;width:1px;height:4px;background:#5a5a5a;"></div>
<div class="a" style="left:963px;top:415px;width:1px;height:4px;background:#5a5a5a;"></div>
<div class="a" style="left:970px;top:415px;width:1px;height:4px;background:#5a5a5a;"></div>
<div class="a" style="left:978px;top:415px;width:1px;height:4px;background:#5a5a5a;"></div>
<div class="a" style="left:986px;top:415px;width:1px;height:4px;background:#5a5a5a;"></div>
<div class="a" style="left:994px;top:415px;width:1px;height:4px;background:#5a5a5a;"></div>
<div class="a" style="left:1001px;top:415px;width:1px;height:4px;background:#5a5a5a;"></div>
<div class="a" style="left:1009px;top:415px;width:1px;height:4px;background:#5a5a5a;"></div>
<div class="a" style="left:1017px;top:415px;width:1px;height:4px;background:#5a5a5a;"></div>
<div class="a" style="left:1024px;top:415px;width:1px;height:4px;background:#5a5a5a;"></div>
<div class="a" style="left:1032px;top:410px;width:1px;height:9px;background:#5a5a5a;"></div>
<div class="a" style="left:1040px;top:415px;width:1px;height:4px;background:#5a5a5a;"></div>
<div class="a" style="left:1048px;top:415px;width:1px;height:4px;background:#5a5a5a;"></div>
<div class="a" style="left:1055px;top:415px;width:1px;height:4px;background:#5a5a5a;"></div>
<div class="a" style="left:1063px;top:415px;width:1px;height:4px;background:#5a5a5a;"></div>
<div class="a" style="left:1071px;top:415px;width:1px;height:4px;background:#5a5a5a;"></div>
<div class="a" style="left:1079px;top:415px;width:1px;height:4px;background:#5a5a5a;"></div>
<div class="a" style="left:1086px;top:415px;width:1px;height:4px;background:#5a5a5a;"></div>
<div class="a" style="left:1094px;top:415px;width:1px;height:4px;background:#5a5a5a;"></div>
<div class="a" style="left:1102px;top:415px;width:1px;height:4px;background:#5a5a5a;"></div>
<div class="a" style="left:1109px;top:415px;width:1px;height:4px;background:#5a5a5a;"></div>
<div class="a" style="left:1117px;top:415px;width:1px;height:4px;background:#5a5a5a;"></div>
<div class="a" style="left:1125px;top:415px;width:1px;height:4px;background:#5a5a5a;"></div>
<div class="a" style="left:1133px;top:415px;width:1px;height:4px;background:#5a5a5a;"></div>
<div class="a" style="left:1140px;top:415px;width:1px;height:4px;background:#5a5a5a;"></div>
<div class="a" style="left:1148px;top:410px;width:1px;height:9px;background:#5a5a5a;"></div>
<div class="a" style="left:1156px;top:415px;width:1px;height:4px;background:#5a5a5a;"></div>
<div class="a" style="left:1164px;top:415px;width:1px;height:4px;background:#5a5a5a;"></div>
<div class="a" style="left:1171px;top:415px;width:1px;height:4px;background:#5a5a5a;"></div>
<div class="a" style="left:1179px;top:415px;width:1px;height:4px;background:#5a5a5a;"></div>
<div class="a" style="left:1187px;top:415px;width:1px;height:4px;background:#5a5a5a;"></div>
<div class="a" style="left:1194px;top:415px;width:1px;height:4px;background:#5a5a5a;"></div>
<div class="a" style="left:1202px;top:415px;width:1px;height:4px;background:#5a5a5a;"></div>
<div class="a" style="left:1210px;top:415px;width:1px;height:4px;background:#5a5a5a;"></div>
<div class="a" style="left:1218px;top:415px;width:1px;height:4px;background:#5a5a5a;"></div>
<div class="a" style="left:1225px;top:415px;width:1px;height:4px;background:#5a5a5a;"></div>
<div class="a" style="left:1233px;top:415px;width:1px;height:4px;background:#5a5a5a;"></div>
<div class="a" style="left:1241px;top:415px;width:1px;height:4px;background:#5a5a5a;"></div>
<div class="a" style="left:1249px;top:415px;width:1px;height:4px;background:#5a5a5a;"></div>
<div class="a" style="left:1256px;top:415px;width:1px;height:4px;background:#5a5a5a;"></div>
<div class="a" style="left:1264px;top:410px;width:1px;height:9px;background:#5a5a5a;"></div>
<div class="a" style="left:568px;top:420px;width:700px;height:8px;background:#2c2c2c;"></div>
<svg style="left:567px;top:418px" width="702" height="12"><circle cx="6" cy="5.5" r="3.6" stroke="#a8a8a8" stroke-width="1.8" fill="#2c2c2c"/><circle cx="696" cy="5.5" r="3.6" stroke="#a8a8a8" stroke-width="1.8" fill="#2c2c2c"/></svg>
<svg style="left:810px;top:407px" width="12" height="11"><path d="M1 1H10V7L7.5 10H1Z" fill="#2d8ceb"/></svg>
<svg style="left:766px;top:438px" width="11" height="11"><path d="M0.5 0.5H10.5V7L5.5 10.5L0.5 7Z" fill="#c4c4c4"/></svg>
<svg style="left:798px;top:437px" width="7" height="13"><path d="M5 1H3.5V5.5L1 6.5L3.5 7.5V12H5" stroke="#c4c4c4" stroke-width="1.6" fill="none"/></svg>
<svg style="left:822px;top:437px" width="7" height="13"><path d="M1 1H2.5V5.5L5 6.5L2.5 7.5V12H1" stroke="#c4c4c4" stroke-width="1.6" fill="none"/></svg>
<svg style="left:857px;top:437px" width="15" height="13"><path d="M3 1H1.8V5.5L0 6.5L1.8 7.5V12H3" stroke="#c4c4c4" stroke-width="1.5" fill="none"/><path d="M4 6.5L8.5 2.5V10.5Z" fill="#c4c4c4"/><rect x="8" y="5.5" width="6" height="2" fill="#c4c4c4"/></svg>
<svg style="left:885px;top:438px" width="13" height="11"><path d="M0 5.5L8 0.5V10.5Z" fill="#c4c4c4"/><rect x="9.5" y="0.5" width="2.5" height="10" fill="#c4c4c4"/></svg>
<svg style="left:912px;top:437px" width="13" height="13"><path d="M0.5 0.5L12 6.5L0.5 12.5Z" fill="#c4c4c4"/></svg>
<svg style="left:941px;top:438px" width="13" height="11"><rect x="0" y="0.5" width="2.5" height="10" fill="#c4c4c4"/><path d="M4 0.5L12 5.5L4 10.5Z" fill="#c4c4c4"/></svg>
<svg style="left:967px;top:437px" width="15" height="13"><path d="M12 1H13.2V5.5L15 6.5L13.2 7.5V12H12" stroke="#c4c4c4" stroke-width="1.5" fill="none"/><path d="M11 6.5L6.5 2.5V10.5Z" fill="#c4c4c4"/><rect x="1" y="5.5" width="6" height="2" fill="#c4c4c4"/></svg>
<svg style="left:999px;top:436px" width="19" height="14"><path d="M5 1H13V6H5Z" fill="none" stroke="#c4c4c4" stroke-width="1.6"/><path d="M0 6H18V13H11V10H7V13H0Z" fill="#c4c4c4"/><path d="M7.5 4L9 2.5L10.5 4Z" fill="#c4c4c4"/></svg>
<svg style="left:1027px;top:436px" width="19" height="14"><path d="M5 1H13V6H5Z" fill="none" stroke="#c4c4c4" stroke-width="1.6"/><path d="M0 6H18V13H11V10H7V13H0Z" fill="#c4c4c4"/><rect x="1.8" y="8.5" width="3" height="3" fill="#232323"/><rect x="13.2" y="8.5" width="3" height="3" fill="#232323"/></svg>
<svg style="left:1058px;top:437px" width="15" height="12"><path d="M0.5 3H4L5.5 0.8H9.5L11 3H14.5V11.5H0.5Z" fill="#c4c4c4"/><circle cx="7.5" cy="7" r="2.4" fill="#232323"/><circle cx="7.5" cy="7" r="1.2" fill="#c4c4c4"/></svg>
<svg style="left:1084px;top:436px" width="17" height="15"><rect x="0.5" y="0.5" width="10" height="9" fill="#c4c4c4"/><rect x="6" y="5" width="10" height="9.5" fill="#232323"/><rect x="7" y="6" width="9" height="8.5" fill="#c4c4c4"/><rect x="10" y="9" width="3" height="4" fill="#232323"/></svg>
<svg style="left:1248px;top:438px" width="11" height="11"><path d="M5.5 0.5V10.5M0.5 5.5H10.5" stroke="#d6d6d6" stroke-width="2.6"/></svg>
<div class="t f" style="left:10px;top:469.7px;font-size:10px;color:#d6d6d6;font-weight:bold;--w:102;transform:scaleX(0.8088);">プロジェクト: キーフレーム</div>
<div class="a" style="left:122px;top:471.5px;width:6px;height:1.2px;background:#cfcfcf;"></div>
<div class="a" style="left:122px;top:474.5px;width:6px;height:1.2px;background:#cfcfcf;"></div>
<div class="a" style="left:122px;top:477.5px;width:6px;height:1.2px;background:#cfcfcf;"></div>
<div class="a" style="left:9px;top:482px;width:120px;height:2px;background:#c8c8c8;"></div>
<div class="t f" style="left:146px;top:469.7px;font-size:10px;color:#9a9a9a;--w:71;transform:scaleX(0.7889);">メディアブラウザー</div>
<div class="t f" style="left:252px;top:469.7px;font-size:10px;color:#9a9a9a;--w:10;transform:scaleX(0.6919);">CC</div>
<div class="a" style="left:262px;top:466px;width:1px;height:18px;background:#2c2c2c;"></div>
<svg style="left:281px;top:470px" width="11" height="9"><path d="M1 1L4.5 4.5L1 8M6 1L9.5 4.5L6 8" stroke="#d0d0d0" stroke-width="2" fill="none"/></svg>
<svg style="left:11px;top:492px" width="14" height="11"><path d="M0 0H5L6 1.5H13V10.5H0Z" fill="#3a3a3a"/><rect x="3" y="5" width="5" height="3" fill="#555"/></svg>
<div class="t f" style="left:34px;top:492.7px;font-size:10px;color:#b0b0b0;--w:76;transform:scaleX(0.8601);">キーフレーム.prproj</div>
<div class="a" style="left:12px;top:511px;width:158px;height:17px;background:#1a1a1a;border:1px solid #2a2a2a"></div>
<svg style="left:16px;top:514px" width="10" height="10"><circle cx="6" cy="4" r="3" stroke="#c8c8c8" stroke-width="1.5" fill="none"/><path d="M4 6L0.8 9.2" stroke="#c8c8c8" stroke-width="1.8"/></svg>
<svg style="left:184px;top:512px" width="15" height="12"><path d="M0 0H5L6 1.5H14V11H0Z" fill="#c8c8c8"/><circle cx="8" cy="6" r="2.2" stroke="#232323" stroke-width="1.2" fill="none"/><path d="M6.5 7.5L4.5 9.5" stroke="#232323" stroke-width="1.2"/></svg>
<div class="t f" style="left:217px;top:515.0px;font-size:9.5px;color:#a8a8a8;--w:66;transform:scaleX(0.9207);">10 個中 1 個の...</div>
<div class="a" style="left:11px;top:537px;width:271px;height:127px;background:#1e1e1e;border:1px solid #2a2a2a"></div>
<div class="a" style="left:12px;top:538px;width:269px;height:15px;background:#232323;"></div>
<div class="a" style="left:32px;top:538px;width:1px;height:15px;background:#2c2c2c;"></div>
<div class="t f" style="left:36px;top:541.0px;font-size:9.5px;color:#a8a8a8;--w:16;transform:scaleX(0.8000);">名前</div>
<svg style="left:60px;top:543px" width="9" height="6"><path d="M0.8 5L4.5 1.3L8.2 5" stroke="#c8c8c8" stroke-width="1.5" fill="none"/></svg>
<div class="a" style="left:192px;top:538px;width:1px;height:15px;background:#2c2c2c;"></div>
<div class="t f" style="left:196px;top:541.0px;font-size:9.5px;color:#a8a8a8;--w:56;transform:scaleX(0.8000);">フレームレート</div>
<div class="a" style="left:268px;top:538px;width:1px;height:15px;background:#2c2c2c;"></div>
<svg style="left:275px;top:541px" width="5" height="8"><path d="M0.5 0.5L4 4L0.5 7.5" stroke="#c8c8c8" stroke-width="1.3" fill="none"/></svg>
<div class="a" style="left:12px;top:571px;width:258px;height:1px;background:#262626;"></div>
<div class="a" style="left:16px;top:556px;width:12px;height:11px;background:#86a8dc;"></div>
<svg style="left:55px;top:555px" width="15" height="15"><rect x="0.5" y="0.5" width="9" height="9" fill="#b08ce0"/><rect x="4" y="5" width="10" height="9" fill="#2a8a5a" stroke="#232323" stroke-width="0.8"/><path d="M5 9H13M9 6V13" stroke="#a0e0c0" stroke-width="0.8"/></svg>
<div class="t f" style="left:75px;top:558.2px;font-size:10px;color:#b8b8b8;--w:69;transform:scaleX(0.8994);">sample_006.mp4</div>
<div class="t f" style="left:196px;top:558.5px;font-size:9.5px;color:#b0b0b0;--w:37;transform:scaleX(0.9464);">59.94 fps</div>
<div class="a" style="left:12px;top:590px;width:258px;height:1px;background:#262626;"></div>
<div class="a" style="left:16px;top:575px;width:12px;height:11px;background:#45b24f;"></div>
<svg style="left:55px;top:575px" width="14" height="13"><rect x="6" y="0" width="2" height="13" fill="#b8b8b8"/><rect x="1" y="3" width="12" height="2" fill="#5ab0d8"/><rect x="3" y="6" width="9" height="2" fill="#45b24f"/><rect x="1" y="9" width="12" height="2" fill="#5ab0d8"/><circle cx="7" cy="1.5" r="1.5" fill="#d0d0d0"/></svg>
<div class="t f" style="left:75px;top:577.2px;font-size:10px;color:#b8b8b8;--w:88;transform:scaleX(0.8000);">エフェクトコントロール</div>
<div class="t f" style="left:196px;top:577.5px;font-size:9.5px;color:#b0b0b0;--w:37;transform:scaleX(0.9464);">59.94 fps</div>
<div class="a" style="left:12px;top:609px;width:258px;height:1px;background:#262626;"></div>
<div class="a" style="left:16px;top:594px;width:12px;height:11px;background:#45b24f;"></div>
<svg style="left:55px;top:594px" width="14" height="13"><rect x="6" y="0" width="2" height="13" fill="#b8b8b8"/><rect x="1" y="3" width="12" height="2" fill="#5ab0d8"/><rect x="3" y="6" width="9" height="2" fill="#45b24f"/><rect x="1" y="9" width="12" height="2" fill="#5ab0d8"/><circle cx="7" cy="1.5" r="1.5" fill="#d0d0d0"/></svg>
<div class="t f" style="left:75px;top:596.2px;font-size:10px;color:#b8b8b8;--w:48;transform:scaleX(0.8000);">キーフレーム</div>
<div class="t f" style="left:196px;top:596.5px;font-size:9.5px;color:#b0b0b0;--w:37;transform:scaleX(0.9464);">59.94 fps</div>
<div class="a" style="left:12px;top:611px;width:258px;height:19px;background:#474747;"></div>
<div class="a" style="left:16px;top:614px;width:12px;height:11px;background:#45b24f;"></div>
<svg style="left:55px;top:614px" width="14" height="13"><rect x="6" y="0" width="2" height="13" fill="#b8b8b8"/><rect x="1" y="3" width="12" height="2" fill="#5ab0d8"/><rect x="3" y="6" width="9" height="2" fill="#45b24f"/><rect x="1" y="9" width="12" height="2" fill="#5ab0d8"/><circle cx="7" cy="1.5" r="1.5" fill="#d0d0d0"/></svg>
<div class="t f" style="left:75px;top:616.2px;font-size:10px;color:#9a9a9a;--w:88;transform:scaleX(0.8800);">モーションエフェクト</div>
<div class="t f" style="left:196px;top:616.5px;font-size:9.5px;color:#b0b0b0;--w:37;transform:scaleX(0.9464);">59.94 fps</div>
<div class="a" style="left:12px;top:648px;width:258px;height:1px;background:#262626;"></div>
<div class="a" style="left:16px;top:633px;width:12px;height:11px;background:#45b24f;"></div>
<svg style="left:55px;top:633px" width="14" height="13"><rect x="6" y="0" width="2" height="13" fill="#b8b8b8"/><rect x="1" y="3" width="12" height="2" fill="#5ab0d8"/><rect x="3" y="6" width="9" height="2" fill="#45b24f"/><rect x="1" y="9" width="12" height="2" fill="#5ab0d8"/><circle cx="7" cy="1.5" r="1.5" fill="#d0d0d0"/></svg>
<div class="t f" style="left:75px;top:635.2px;font-size:10px;color:#b8b8b8;--w:80;transform:scaleX(0.8000);">ピクチャインピクチャ</div>
<div class="t f" style="left:196px;top:635.5px;font-size:9.5px;color:#b0b0b0;--w:37;transform:scaleX(0.9464);">59.94 fps</div>
<div class="a" style="left:13px;top:655px;width:43px;height:8px;background:#353535;border-radius:4px"></div>
<div class="a" style="left:274px;top:598px;width:6px;height:50px;background:#353535;border-radius:3px"></div>
<svg style="left:12px;top:680px" width="10" height="11"><path d="M2 5V3A2.5 2.5 0 0 1 7 3" stroke="#2fa043" stroke-width="1.6" fill="none"/><rect x="0.5" y="5" width="8" height="6" fill="#2fa043"/></svg>
<svg style="left:35px;top:680px" width="14" height="11"><rect x="0" y="0" width="3" height="3" fill="#4a8fe0"/><rect x="0" y="4" width="3" height="3" fill="#4a8fe0"/><rect x="0" y="8" width="3" height="3" fill="#4a8fe0"/><rect x="5" y="1" width="9" height="1.6" fill="#4a8fe0"/><rect x="5" y="5" width="9" height="1.6" fill="#4a8fe0"/><rect x="5" y="9" width="9" height="1.6" fill="#4a8fe0"/></svg>
<svg style="left:61px;top:680px" width="10" height="11"><rect x="0.5" y="0.5" width="9" height="7" fill="#c8c8c8"/><rect x="0" y="9" width="10" height="1.6" fill="#c8c8c8"/></svg>
<svg style="left:82px;top:680px" width="16" height="11"><rect x="0.5" y="0.5" width="8" height="6" fill="#b8b8b8"/><rect x="3.5" y="2.5" width="8" height="6" fill="#c0c0c0" stroke="#232323" stroke-width="0.8"/><rect x="7" y="4.5" width="8.5" height="6" fill="#c8c8c8" stroke="#232323" stroke-width="0.8"/></svg>
<svg style="left:106px;top:680px" width="56" height="11"><circle cx="5.5" cy="5.5" r="3.6" stroke="#b8b8b8" stroke-width="1.8" fill="none"/><rect x="10" y="5" width="45" height="1" fill="#6a6a6a"/></svg>
<svg style="left:176px;top:680px" width="30" height="11"><path d="M0 1.5H13M0 5.5H13M0 9.5H13" stroke="#5a5a5a" stroke-width="1.5"/><path d="M20 4L23 7L26 4" stroke="#4a4a4a" stroke-width="1.2" fill="none"/></svg>
<svg style="left:224px;top:680px" width="13" height="11"><rect x="0" y="3" width="3" height="7" fill="#555"/><rect x="4" y="1" width="3" height="9" fill="#555"/><rect x="8" y="3" width="4" height="7" fill="#555"/></svg>
<svg style="left:248px;top:679px" width="11" height="12"><circle cx="6.5" cy="4.5" r="3.5" stroke="#c8c8c8" stroke-width="1.6" fill="none"/><path d="M4 7L0.8 10.5" stroke="#c8c8c8" stroke-width="2"/></svg>
<svg style="left:271px;top:680px" width="13" height="11"><path d="M0 0.5H5L6 2H12.5V10.5H0Z" fill="#c8c8c8"/></svg>
<svg style="left:3px;top:705px" width="11" height="10"><ellipse cx="4" cy="5" rx="3.2" ry="3.2" stroke="#a0a0a0" stroke-width="1.2" fill="none"/><ellipse cx="7" cy="5" rx="3.2" ry="3.2" stroke="#a0a0a0" stroke-width="1.2" fill="none"/></svg>
<div class="a" style="left:305px;top:476px;width:21px;height:20px;background:#1a1a1a;border-radius:2px"></div>
<svg style="left:310px;top:479px" width="12" height="14"><path d="M1 0.5L11 8H6L2.5 13Z" fill="#3d8de0"/></svg>
<svg style="left:308px;top:502px" width="16" height="12"><rect x="0.8" y="1.8" width="9" height="8" stroke="#c4c4c4" stroke-width="1.4" fill="none" stroke-dasharray="2 1.2"/><path d="M6 4H10V2L14 6L10 10V8H6Z" fill="#c4c4c4"/></svg>
<svg style="left:308px;top:523px" width="16" height="13"><rect x="7" y="0" width="2" height="13" fill="#c4c4c4"/><path d="M0 6.5L5 2.5V10.5Z" fill="#c4c4c4"/><path d="M16 6.5L11 2.5V10.5Z" fill="#c4c4c4"/></svg>
<svg style="left:309px;top:544px" width="13" height="13"><path d="M2 6L6 2L12 8L8 12Z" fill="#c4c4c4" /><path d="M5 5.5L8.5 9" stroke="#232323" stroke-width="1"/></svg>
<svg style="left:307px;top:566px" width="17" height="13"><rect x="0" y="0" width="2" height="13" fill="#c4c4c4"/><rect x="15" y="0" width="2" height="13" fill="#c4c4c4"/><path d="M3 6.5L6 4V9Z M14 6.5L11 4V9Z" fill="#c4c4c4"/><rect x="5" y="5.8" width="7" height="1.5" fill="#c4c4c4"/></svg>
<svg style="left:309px;top:588px" width="13" height="13"><path d="M1 12L3 5L8 1L12 5L8 10Z" fill="#c4c4c4"/><circle cx="5.5" cy="7.5" r="1.2" fill="#232323"/></svg>
<svg style="left:309px;top:610px" width="13" height="13"><circle cx="5" cy="5" r="3.8" stroke="#c4c4c4" stroke-width="1.6" fill="none"/><path d="M7.8 7.8L12 12" stroke="#c4c4c4" stroke-width="2.2"/></svg>
<svg style="left:309px;top:631px" width="13" height="13"><path d="M0.5 0.5H12.5V4H11L10 2.5H7.5V11H9.5V12.5H3.5V11H5.5V2.5H3L2 4H0.5Z" fill="#c4c4c4"/></svg>
<svg style="left:321px;top:513px" width="4" height="4"><path d="M4 0V4H0Z" fill="#8a8a8a"/></svg>
<svg style="left:321px;top:535px" width="4" height="4"><path d="M4 0V4H0Z" fill="#8a8a8a"/></svg>
<svg style="left:321px;top:556px" width="4" height="4"><path d="M4 0V4H0Z" fill="#8a8a8a"/></svg>
<svg style="left:321px;top:578px" width="4" height="4"><path d="M4 0V4H0Z" fill="#8a8a8a"/></svg>
<svg style="left:321px;top:601px" width="4" height="4"><path d="M4 0V4H0Z" fill="#8a8a8a"/></svg>
<svg style="left:321px;top:623px" width="4" height="4"><path d="M4 0V4H0Z" fill="#8a8a8a"/></svg>
<svg style="left:321px;top:643px" width="4" height="4"><path d="M4 0V4H0Z" fill="#8a8a8a"/></svg>
<div class="t f" style="left:359px;top:469.7px;font-size:10px;color:#9a9a9a;--w:88;transform:scaleX(0.8000);">エフェクトコントロール</div>
<div class="t f" style="left:494px;top:469.7px;font-size:10px;color:#9a9a9a;--w:79;transform:scaleX(0.7900);">ピクチャインピクチャ</div>
<div class="t f" style="left:618px;top:469.7px;font-size:10px;color:#9a9a9a;--w:48;transform:scaleX(0.8000);">キーフレーム</div>
<svg style="left:699px;top:471px" width="6" height="6"><path d="M0.5 0.5L5.5 5.5M5.5 0.5L0.5 5.5" stroke="#9a9a9a" stroke-width="1"/></svg>
<div class="t f" style="left:712px;top:469.7px;font-size:10px;color:#d6d6d6;font-weight:bold;--w:80;transform:scaleX(0.8000);">モーションエフェクト</div>
<div class="a" style="left:801px;top:471.5px;width:6px;height:1.2px;background:#cfcfcf;"></div>
<div class="a" style="left:801px;top:474.5px;width:6px;height:1.2px;background:#cfcfcf;"></div>
<div class="a" style="left:801px;top:477.5px;width:6px;height:1.2px;background:#cfcfcf;"></div>
<div class="a" style="left:698px;top:482px;width:110px;height:2px;background:#c8c8c8;"></div>
<div class="t f" style="left:352px;top:489.4px;font-size:13.5px;color:#3d8de0;font-weight:bold;--w:70;transform:scaleX(0.9516);">00;00;00;19</div>
<svg style="left:355px;top:507px" width="13" height="12"><path d="M6.5 0V12M0.8 3L12.2 9M0.8 9L12.2 3" stroke="#3d8de0" stroke-width="1.5"/><circle cx="6.5" cy="6" r="2" fill="#232323"/></svg>
<svg style="left:383px;top:507px" width="11" height="11"><path d="M1.5 11V5A4 4 0 0 1 9.5 5V11" stroke="#3d8de0" stroke-width="3" fill="none"/></svg>
<svg style="left:409px;top:507px" width="13" height="12"><rect x="0" y="0" width="12" height="5" fill="#3d8de0"/><rect x="0" y="6" width="5" height="6" fill="#3d8de0"/><path d="M6 2L12 9L8.5 9L7 12Z" fill="#cfe4fb" stroke="#232323" stroke-width="0.6"/></svg>
<svg style="left:438px;top:508px" width="9" height="10"><path d="M0.5 0.5H8.5V6L4.5 9.5L0.5 6Z" fill="#c8c8c8"/></svg>
<svg style="left:464px;top:507px" width="13" height="13"><path d="M6 6L11.2 11.2" stroke="#c8c8c8" stroke-width="2.6" stroke-linecap="round"/><circle cx="4.3" cy="4.3" r="3.8" fill="#c8c8c8"/><path d="M0 1.2L3.2 4.4L4.6 3L1.4 -0.2Z" fill="#232323"/></svg>
<div class="a" style="left:339px;top:529px;width:188px;height:151px;background:#232323;"></div>
<div class="a" style="left:339px;top:549px;width:851px;height:1px;background:#2c2c2c;"></div>
<div class="a" style="left:339px;top:570px;width:851px;height:1px;background:#2c2c2c;"></div>
<div class="a" style="left:339px;top:612px;width:851px;height:1px;background:#2c2c2c;"></div>
<div class="a" style="left:339px;top:660px;width:851px;height:1px;background:#2c2c2c;"></div>
<div class="a" style="left:339px;top:680px;width:851px;height:1px;background:#2c2c2c;"></div>
<div class="a" style="left:339px;top:529px;width:851px;height:1px;background:#2c2c2c;"></div>
<div class="a" style="left:339px;top:611px;width:851px;height:1px;background:#2e2e2e;"></div>
<div class="a" style="left:339px;top:615px;width:851px;height:1px;background:#2e2e2e;"></div>
<div class="a" style="left:526px;top:523px;width:1px;height:157px;background:#2c2c2c;"></div>
<div class="a" style="left:339px;top:528px;width:851px;height:1px;background:#2a2a2a;"></div>
<div class="a" style="left:416px;top:530px;width:42px;height:19px;background:#262626;"></div>
<div class="a" style="left:416px;top:550px;width:42px;height:19px;background:#262626;"></div>
<div class="a" style="left:416px;top:571px;width:42px;height:19px;background:#262626;"></div>
<div class="a" style="left:416px;top:616px;width:42px;height:19px;background:#262626;"></div>
<div class="a" style="left:416px;top:662px;width:42px;height:18px;background:#262626;"></div>
<svg style="left:378px;top:535px" width="8" height="9"><path d="M2 4V2.6A2 2 0 0 1 6 2.6" stroke="#c8c8c8" stroke-width="1.4" fill="none"/><rect x="0" y="4" width="7.5" height="5" fill="#c8c8c8"/></svg>
<div class="t f" style="left:396px;top:535.5px;font-size:9.5px;color:#9a9a9a;--w:11;transform:scaleX(0.9462);">V3</div>
<svg style="left:420px;top:534px" width="12" height="10"><rect x="0.7" y="0.7" width="7" height="8.6" stroke="#c8c8c8" stroke-width="1.4" fill="none"/><rect x="1" y="4" width="10.5" height="1.5" fill="#c8c8c8"/><rect x="8" y="2" width="3.5" height="6" fill="#c8c8c8"/></svg>
<svg style="left:442px;top:536px" width="12" height="8"><path d="M0.5 4Q6 -2 11.5 4Q6 10 0.5 4Z" stroke="#c8c8c8" stroke-width="1.4" fill="none"/><circle cx="6" cy="4" r="1.8" fill="#c8c8c8"/></svg>
<svg style="left:378px;top:555px" width="8" height="9"><path d="M2 4V2.6A2 2 0 0 1 6 2.6" stroke="#c8c8c8" stroke-width="1.4" fill="none"/><rect x="0" y="4" width="7.5" height="5" fill="#c8c8c8"/></svg>
<div class="t f" style="left:396px;top:555.5px;font-size:9.5px;color:#9a9a9a;--w:11;transform:scaleX(0.9462);">V2</div>
<svg style="left:420px;top:554px" width="12" height="10"><rect x="0.7" y="0.7" width="7" height="8.6" stroke="#c8c8c8" stroke-width="1.4" fill="none"/><rect x="1" y="4" width="10.5" height="1.5" fill="#c8c8c8"/><rect x="8" y="2" width="3.5" height="6" fill="#c8c8c8"/></svg>
<svg style="left:442px;top:556px" width="12" height="8"><path d="M0.5 4Q6 -2 11.5 4Q6 10 0.5 4Z" stroke="#c8c8c8" stroke-width="1.4" fill="none"/><circle cx="6" cy="4" r="1.8" fill="#c8c8c8"/></svg>
<div class="a" style="left:389px;top:570px;width:26px;height:42px;background:#0d5a96;"></div>
<svg style="left:378px;top:586px" width="8" height="9"><path d="M2 4V2.6A2 2 0 0 1 6 2.6" stroke="#c8c8c8" stroke-width="1.4" fill="none"/><rect x="0" y="4" width="7.5" height="5" fill="#c8c8c8"/></svg>
<div class="t f" style="left:396px;top:587.0px;font-size:9.5px;color:#cfe0f5;--w:10;transform:scaleX(0.8602);">V1</div>
<svg style="left:420px;top:575px" width="12" height="10"><rect x="0.7" y="0.7" width="7" height="8.6" stroke="#c8c8c8" stroke-width="1.4" fill="none"/><rect x="1" y="4" width="10.5" height="1.5" fill="#c8c8c8"/><rect x="8" y="2" width="3.5" height="6" fill="#c8c8c8"/></svg>
<svg style="left:442px;top:577px" width="12" height="8"><path d="M0.5 4Q6 -2 11.5 4Q6 10 0.5 4Z" stroke="#c8c8c8" stroke-width="1.4" fill="none"/><circle cx="6" cy="4" r="1.8" fill="#c8c8c8"/></svg>
<div class="t f" style="left:417px;top:595.5px;font-size:9.5px;color:#9a9a9a;--w:29;transform:scaleX(0.9045);">Video 1</div>
<div class="a" style="left:389px;top:615px;width:26px;height:45px;background:#0d5a96;"></div>
<svg style="left:378px;top:633px" width="8" height="9"><path d="M2 4V2.6A2 2 0 0 1 6 2.6" stroke="#c8c8c8" stroke-width="1.4" fill="none"/><rect x="0" y="4" width="7.5" height="5" fill="#c8c8c8"/></svg>
<div class="t f" style="left:395px;top:634.5px;font-size:9.5px;color:#cfe0f5;--w:11;transform:scaleX(0.9462);">A1</div>
<svg style="left:420px;top:620px" width="12" height="10"><rect x="0.7" y="0.7" width="7" height="8.6" stroke="#c8c8c8" stroke-width="1.4" fill="none"/><rect x="1" y="4" width="10.5" height="1.5" fill="#c8c8c8"/><rect x="8" y="2" width="3.5" height="6" fill="#c8c8c8"/></svg>
<div class="t f" style="left:444px;top:621.5px;font-size:9.5px;color:#c8c8c8;font-weight:bold;--w:7;transform:scaleX(0.8836);">M</div>
<div class="t f" style="left:466px;top:621.5px;font-size:9.5px;color:#c8c8c8;font-weight:bold;--w:7;transform:scaleX(1.1034);">S</div>
<svg style="left:487px;top:619px" width="9" height="12"><rect x="2.5" y="0" width="4" height="7" rx="2" fill="#4e4e4e"/><path d="M1 5Q1 9 4.5 9Q8 9 8 5M4.5 9V12M2 11.5H7" stroke="#4e4e4e" stroke-width="1.2" fill="none"/></svg>
<div class="t f" style="left:417px;top:641.0px;font-size:9.5px;color:#9a9a9a;--w:47;transform:scaleX(0.8112);">オーディオ 1</div>
<div class="a" style="left:389px;top:661px;width:26px;height:19px;background:#0d5a96;"></div>
<svg style="left:378px;top:667px" width="8" height="9"><path d="M2 4V2.6A2 2 0 0 1 6 2.6" stroke="#c8c8c8" stroke-width="1.4" fill="none"/><rect x="0" y="4" width="7.5" height="5" fill="#c8c8c8"/></svg>
<div class="t f" style="left:395px;top:667.0px;font-size:9.5px;color:#cfe0f5;--w:11;transform:scaleX(0.9462);">A2</div>
<svg style="left:420px;top:666px" width="12" height="10"><rect x="0.7" y="0.7" width="7" height="8.6" stroke="#c8c8c8" stroke-width="1.4" fill="none"/><rect x="1" y="4" width="10.5" height="1.5" fill="#c8c8c8"/><rect x="8" y="2" width="3.5" height="6" fill="#c8c8c8"/></svg>
<div class="t f" style="left:444px;top:667.0px;font-size:9.5px;color:#c8c8c8;font-weight:bold;--w:7;transform:scaleX(0.8836);">M</div>
<div class="t f" style="left:466px;top:667.0px;font-size:9.5px;color:#c8c8c8;font-weight:bold;--w:7;transform:scaleX(1.1034);">S</div>
<svg style="left:487px;top:665px" width="9" height="12"><rect x="2.5" y="0" width="4" height="7" rx="2" fill="#4e4e4e"/><path d="M1 5Q1 9 4.5 9Q8 9 8 5M4.5 9V12M2 11.5H7" stroke="#4e4e4e" stroke-width="1.2" fill="none"/></svg>
<div class="t f" style="left:528px;top:499.7px;font-size:9px;color:#b0b0b0;--w:25;transform:scaleX(0.9988);">;00;00</div>
<div class="t f" style="left:608px;top:499.7px;font-size:9px;color:#b0b0b0;--w:48;transform:scaleX(1.0095);">00;00;01;00</div>
<div class="t f" style="left:712px;top:499.7px;font-size:9px;color:#b0b0b0;--w:48;transform:scaleX(1.0095);">00;00;02;00</div>
<div class="t f" style="left:816px;top:499.7px;font-size:9px;color:#b0b0b0;--w:48;transform:scaleX(1.0095);">00;00;03;00</div>
<div class="t f" style="left:920px;top:499.7px;font-size:9px;color:#b0b0b0;--w:48;transform:scaleX(1.0095);">00;00;04;00</div>
<div class="t f" style="left:1024px;top:499.7px;font-size:9px;color:#b0b0b0;--w:48;transform:scaleX(1.0095);">00;00;05;00</div>
<div class="t f" style="left:1128px;top:499.7px;font-size:9px;color:#b0b0b0;--w:48;transform:scaleX(1.0095);">00;00;06;00</div>
<div class="a" style="left:528px;top:510px;width:1px;height:9px;background:#6a6a6a;"></div>
<div class="a" style="left:536px;top:514px;width:1px;height:5px;background:#6a6a6a;"></div>
<div class="a" style="left:545px;top:514px;width:1px;height:5px;background:#6a6a6a;"></div>
<div class="a" style="left:553px;top:514px;width:1px;height:5px;background:#6a6a6a;"></div>
<div class="a" style="left:562px;top:514px;width:1px;height:5px;background:#6a6a6a;"></div>
<div class="a" style="left:571px;top:514px;width:1px;height:5px;background:#6a6a6a;"></div>
<div class="a" style="left:579px;top:514px;width:1px;height:5px;background:#6a6a6a;"></div>
<div class="a" style="left:588px;top:514px;width:1px;height:5px;background:#6a6a6a;"></div>
<div class="a" style="left:597px;top:514px;width:1px;height:5px;background:#6a6a6a;"></div>
<div class="a" style="left:605px;top:514px;width:1px;height:5px;background:#6a6a6a;"></div>
<div class="a" style="left:614px;top:514px;width:1px;height:5px;background:#6a6a6a;"></div>
<div class="a" style="left:623px;top:514px;width:1px;height:5px;background:#6a6a6a;"></div>
<div class="a" style="left:631px;top:510px;width:1px;height:9px;background:#6a6a6a;"></div>
<div class="a" style="left:640px;top:514px;width:1px;height:5px;background:#6a6a6a;"></div>
<div class="a" style="left:648px;top:514px;width:1px;height:5px;background:#6a6a6a;"></div>
<div class="a" style="left:657px;top:514px;width:1px;height:5px;background:#6a6a6a;"></div>
<div class="a" style="left:666px;top:514px;width:1px;height:5px;background:#6a6a6a;"></div>
<div class="a" style="left:674px;top:514px;width:1px;height:5px;background:#6a6a6a;"></div>
<div class="a" style="left:683px;top:514px;width:1px;height:5px;background:#6a6a6a;"></div>
<div class="a" style="left:692px;top:514px;width:1px;height:5px;background:#6a6a6a;"></div>
<div class="a" style="left:700px;top:514px;width:1px;height:5px;background:#6a6a6a;"></div>
<div class="a" style="left:709px;top:514px;width:1px;height:5px;background:#6a6a6a;"></div>
<div class="a" style="left:717px;top:514px;width:1px;height:5px;background:#6a6a6a;"></div>
<div class="a" style="left:726px;top:514px;width:1px;height:5px;background:#6a6a6a;"></div>
<div class="a" style="left:735px;top:510px;width:1px;height:9px;background:#6a6a6a;"></div>
<div class="a" style="left:743px;top:514px;width:1px;height:5px;background:#6a6a6a;"></div>
<div class="a" style="left:752px;top:514px;width:1px;height:5px;background:#6a6a6a;"></div>
<div class="a" style="left:761px;top:514px;width:1px;height:5px;background:#6a6a6a;"></div>
<div class="a" style="left:769px;top:514px;width:1px;height:5px;background:#6a6a6a;"></div>
<div class="a" style="left:778px;top:514px;width:1px;height:5px;background:#6a6a6a;"></div>
<div class="a" style="left:786px;top:514px;width:1px;height:5px;background:#6a6a6a;"></div>
<div class="a" style="left:795px;top:514px;width:1px;height:5px;background:#6a6a6a;"></div>
<div class="a" style="left:804px;top:514px;width:1px;height:5px;background:#6a6a6a;"></div>
<div class="a" style="left:812px;top:514px;width:1px;height:5px;background:#6a6a6a;"></div>
<div class="a" style="left:821px;top:514px;width:1px;height:5px;background:#6a6a6a;"></div>
<div class="a" style="left:830px;top:514px;width:1px;height:5px;background:#6a6a6a;"></div>
<div class="a" style="left:838px;top:510px;width:1px;height:9px;background:#6a6a6a;"></div>
<div class="a" style="left:847px;top:514px;width:1px;height:5px;background:#6a6a6a;"></div>
<div class="a" style="left:856px;top:514px;width:1px;height:5px;background:#6a6a6a;"></div>
<div class="a" style="left:864px;top:514px;width:1px;height:5px;background:#6a6a6a;"></div>
<div class="a" style="left:873px;top:514px;width:1px;height:5px;background:#6a6a6a;"></div>
<div class="a" style="left:881px;top:514px;width:1px;height:5px;background:#6a6a6a;"></div>
<div class="a" style="left:890px;top:514px;width:1px;height:5px;background:#6a6a6a;"></div>
<div class="a" style="left:899px;top:514px;width:1px;height:5px;background:#6a6a6a;"></div>
<div class="a" style="left:907px;top:514px;width:1px;height:5px;background:#6a6a6a;"></div>
<div class="a" style="left:916px;top:514px;width:1px;height:5px;background:#6a6a6a;"></div>
<div class="a" style="left:925px;top:514px;width:1px;height:5px;background:#6a6a6a;"></div>
<div class="a" style="left:933px;top:514px;width:1px;height:5px;background:#6a6a6a;"></div>
<div class="a" style="left:942px;top:510px;width:1px;height:9px;background:#6a6a6a;"></div>
<div class="a" style="left:950px;top:514px;width:1px;height:5px;background:#6a6a6a;"></div>
<div class="a" style="left:959px;top:514px;width:1px;height:5px;background:#6a6a6a;"></div>
<div class="a" style="left:968px;top:514px;width:1px;height:5px;background:#6a6a6a;"></div>
<div class="a" style="left:976px;top:514px;width:1px;height:5px;background:#6a6a6a;"></div>
<div class="a" style="left:985px;top:514px;width:1px;height:5px;background:#6a6a6a;"></div>
<div class="a" style="left:994px;top:514px;width:1px;height:5px;background:#6a6a6a;"></div>
<div class="a" style="left:1002px;top:514px;width:1px;height:5px;background:#6a6a6a;"></div>
<div class="a" style="left:1011px;top:514px;width:1px;height:5px;background:#6a6a6a;"></div>
<div class="a" style="left:1020px;top:514px;width:1px;height:5px;background:#6a6a6a;"></div>
<div class="a" style="left:1028px;top:514px;width:1px;height:5px;background:#6a6a6a;"></div>
<div class="a" style="left:1037px;top:514px;width:1px;height:5px;background:#6a6a6a;"></div>
<div class="a" style="left:1045px;top:510px;width:1px;height:9px;background:#6a6a6a;"></div>
<div class="a" style="left:1054px;top:514px;width:1px;height:5px;background:#6a6a6a;"></div>
<div class="a" style="left:1063px;top:514px;width:1px;height:5px;background:#6a6a6a;"></div>
<div class="a" style="left:1071px;top:514px;width:1px;height:5px;background:#6a6a6a;"></div>
<div class="a" style="left:1080px;top:514px;width:1px;height:5px;background:#6a6a6a;"></div>
<div class="a" style="left:1089px;top:514px;width:1px;height:5px;background:#6a6a6a;"></div>
<div class="a" style="left:1097px;top:514px;width:1px;height:5px;background:#6a6a6a;"></div>
<div class="a" style="left:1106px;top:514px;width:1px;height:5px;background:#6a6a6a;"></div>
<div class="a" style="left:1114px;top:514px;width:1px;height:5px;background:#6a6a6a;"></div>
<div class="a" style="left:1123px;top:514px;width:1px;height:5px;background:#6a6a6a;"></div>
<div class="a" style="left:1132px;top:514px;width:1px;height:5px;background:#6a6a6a;"></div>
<div class="a" style="left:1140px;top:514px;width:1px;height:5px;background:#6a6a6a;"></div>
<div class="a" style="left:1149px;top:510px;width:1px;height:9px;background:#6a6a6a;"></div>
<div class="a" style="left:1158px;top:514px;width:1px;height:5px;background:#6a6a6a;"></div>
<div class="a" style="left:1166px;top:514px;width:1px;height:5px;background:#6a6a6a;"></div>
<div class="a" style="left:1175px;top:514px;width:1px;height:5px;background:#6a6a6a;"></div>
<div class="a" style="left:1183px;top:514px;width:1px;height:5px;background:#6a6a6a;"></div>
<div class="a" style="left:527px;top:519px;width:311px;height:3px;background:#e6d630;"></div>
<div class="a" style="left:527px;top:522px;width:311px;height:2px;background:#1c1c5a;"></div>
<div class="a" style="left:527px;top:570px;width:311px;height:42px;background:#d2d2d2;"></div>
<div class="a" style="left:531px;top:573px;width:303px;height:35px;background:#77a0d4;"></div>
<svg style="left:531px;top:583px" width="70" height="25" viewBox="0 0 70 25" preserveAspectRatio="none">
<rect width="70" height="25" fill="#3a5a30"/>
<path d="M0 0H34V14L0 15Z" fill="#34502c"/>
<path d="M34 0H70V14H34Z" fill="#456a3a"/>
<path d="M40 0L48 5L54 2L52 0Z" fill="#7a9080"/>
<path d="M53 0L57 6L61 4L60 0Z" fill="#f4f6f8"/>
<path d="M0 15L34 13L70 14V25H0Z" fill="#e2e0d6"/>
<path d="M0 16L10 16L16 25H0Z" fill="#6a9a8c"/>
<path d="M34 13L40 14L46 25H34Z" fill="#9aa898"/>
<rect x="0" y="14" width="70" height="11" fill="#666" filter="url(#nz)" opacity="0.35"/>
<rect x="0" y="0" width="70" height="14" fill="#1a3018" filter="url(#nz)" opacity="0.5"/>
</svg>
<div class="a" style="left:535px;top:574px;width:10px;height:7px;background:#e8c81a;"></div>
<div class="t" style="left:536.5px;top:574.7px;font-size:7px;color:#6a5000;font-family:"Liberation Serif",serif"><i>fx</i></div>
<div class="t f" style="left:551px;top:571.8px;font-size:9.5px;color:#3a4a66;--w:83;transform:scaleX(0.9525);">sample_002.mp4 [V]</div>
<div class="a" style="left:527px;top:615px;width:311px;height:45px;background:#d0d0d0;"></div>
<svg style="left:0;top:0" width="1280" height="720"><polygon points="531,618 531.0,627.5 531.9,626.1 532.8,625.4 533.7,626.8 534.6,624.7 535.5,628.8 536.4,627.3 537.3,629.2 538.2,627.7 539.1,626.8 540.0,627.5 540.9,627.0 541.8,628.8 542.7,628.2 543.6,627.7 544.5,625.1 545.4,628.5 546.3,627.5 547.2,627.9 548.1,628.8 549.0,627.3 549.9,628.1 550.8,628.6 551.7,627.1 552.6,628.7 553.5,625.5 554.4,628.7 555.3,629.0 556.2,628.5 557.1,628.2 558.0,628.9 558.9,627.9 559.8,626.9 560.7,628.4 561.6,628.8 562.5,627.7 563.4,626.8 564.3,625.5 565.2,628.7 566.1,627.3 567.0,626.8 567.9,628.1 568.8,628.8 569.7,627.4 570.6,627.6 571.5,629.2 572.4,627.2 573.3,627.3 574.2,628.2 575.1,626.7 576.0,627.7 576.9,629.2 577.8,628.0 578.7,625.6 579.6,628.7 580.5,628.8 581.4,625.3 582.3,625.0 583.2,627.1 584.1,625.1 585.0,627.0 585.9,626.8 586.8,628.3 587.7,627.4 588.6,627.6 589.5,628.9 590.4,627.9 591.3,624.9 592.2,627.4 593.1,624.2 594.0,628.1 594.9,625.8 595.8,629.2 596.7,628.5 597.6,627.7 598.5,628.7 599.4,628.7 600.3,627.3 601.2,629.3 602.1,628.8 603.0,628.6 603.9,628.0 604.8,624.9 605.7,627.4 606.6,629.2 607.5,629.1 608.4,629.2 609.3,627.3 610.2,627.2 611.1,628.3 612.0,628.9 612.9,628.4 613.8,626.9 614.7,629.1 615.6,628.7 616.5,627.2 617.4,627.6 618.3,629.2 619.2,627.7 620.1,628.6 621.0,627.0 621.9,629.1 622.8,627.1 623.7,629.2 624.6,627.6 625.5,624.1 626.4,628.4 627.3,629.1 628.2,629.0 629.1,627.2 630.0,627.5 630.9,628.2 631.8,627.8 632.7,629.1 633.6,627.9 634.5,629.1 635.4,629.1 636.3,628.1 637.2,626.7 638.1,624.5 639.0,627.1 639.9,628.6 640.8,627.5 641.7,628.1 642.6,627.0 643.5,627.3 644.4,628.7 645.3,628.2 646.2,629.1 647.1,628.3 648.0,628.0 648.9,627.9 649.8,627.9 650.7,628.5 651.6,629.1 652.5,628.2 653.4,628.9 654.3,627.0 655.2,626.9 656.1,626.9 657.0,628.7 657.9,627.1 658.8,628.4 659.7,629.0 660.6,627.3 661.5,627.7 662.4,629.3 663.3,627.1 664.2,628.0 665.1,627.2 666.0,626.2 666.9,625.8 667.8,628.3 668.7,626.9 669.6,628.7 670.5,627.0 671.4,626.8 672.3,627.4 673.2,627.8 674.1,628.8 675.0,627.1 675.9,628.2 676.8,624.4 677.7,624.9 678.6,628.3 679.5,626.9 680.4,626.9 681.3,627.9 682.2,628.1 683.1,627.4 684.0,628.1 684.9,627.0 685.8,626.8 686.7,627.5 687.6,628.7 688.5,628.0 689.4,625.7 690.3,626.7 691.2,628.1 692.1,627.9 693.0,627.0 693.9,627.8 694.8,628.9 695.7,628.0 696.6,629.3 697.5,628.9 698.4,628.4 699.3,625.9 700.2,626.9 701.1,627.4 702.0,626.9 702.9,629.0 703.8,627.4 704.7,627.5 705.6,627.1 706.5,627.4 707.4,629.2 708.3,627.3 709.2,627.5 710.1,626.7 711.0,627.9 711.9,627.2 712.8,626.7 713.7,626.9 714.6,624.9 715.5,627.3 716.4,628.1 717.3,628.4 718.2,629.0 719.1,627.5 720.0,627.1 720.9,625.6 721.8,629.0 722.7,628.6 723.6,627.1 724.5,628.0 725.4,628.8 726.3,628.2 727.2,628.5 728.1,625.6 729.0,624.9 729.9,628.2 730.8,628.3 731.7,625.3 732.6,628.6 733.5,628.1 734.4,626.9 735.3,625.5 736.2,628.6 737.1,628.6 738.0,628.0 738.9,627.9 739.8,628.7 740.7,626.7 741.6,627.4 742.5,627.5 743.4,624.8 744.3,628.4 745.2,628.5 746.1,628.0 747.0,625.1 747.9,627.2 748.8,626.9 749.7,628.8 750.6,627.9 751.5,627.2 752.4,627.2 753.3,627.1 754.2,629.2 755.1,628.8 756.0,629.0 756.9,627.3 757.8,626.5 758.7,628.0 759.6,627.5 760.5,627.6 761.4,626.3 762.3,628.9 763.2,629.1 764.1,629.0 765.0,627.7 765.9,629.3 766.8,627.6 767.7,625.8 768.6,628.9 769.5,629.1 770.4,627.4 771.3,627.2 772.2,629.2 773.1,628.8 774.0,629.1 774.9,628.1 775.8,626.8 776.7,627.9 777.6,628.4 778.5,626.8 779.4,627.0 780.3,627.6 781.2,628.6 782.1,627.4 783.0,627.5 783.9,627.7 784.8,627.1 785.7,629.1 786.6,627.3 787.5,629.3 788.4,627.1 789.3,626.9 790.2,626.9 791.1,627.4 792.0,629.0 792.9,627.8 793.8,628.1 794.7,625.7 795.6,629.2 796.5,628.0 797.4,628.9 798.3,627.4 799.2,627.7 800.1,629.2 801.0,627.4 801.9,628.5 802.8,627.9 803.7,626.7 804.6,629.1 805.5,628.9 806.4,625.6 807.3,628.1 808.2,629.1 809.1,628.4 810.0,627.9 810.9,626.8 811.8,627.3 812.7,628.4 813.6,627.0 814.5,628.4 815.4,624.7 816.3,628.2 817.2,627.3 818.1,626.7 819.0,627.9 819.9,628.4 820.8,627.9 821.7,627.3 822.6,628.5 823.5,626.8 824.4,628.5 825.3,627.4 826.2,629.1 827.1,626.8 828.0,627.8 828.9,627.2 829.8,628.6 830.7,627.2 831.6,627.5 832.5,627.3 833.4,628.7 834,618" fill="#375680"/></svg>
<div class="a" style="left:527px;top:637px;width:311px;height:1px;background:#3a3a3a;"></div>
<svg style="left:0;top:0" width="1280" height="720"><polygon points="531,638 531.0,653.2 531.9,651.2 532.8,651.8 533.7,653.2 534.6,651.7 535.5,653.2 536.4,648.7 537.3,653.0 538.2,652.6 539.1,653.1 540.0,651.2 540.9,650.1 541.8,651.7 542.7,651.6 543.6,650.7 544.5,651.6 545.4,651.0 546.3,651.2 547.2,652.8 548.1,649.6 549.0,651.7 549.9,651.2 550.8,650.9 551.7,652.8 552.6,649.2 553.5,653.1 554.4,652.6 555.3,651.6 556.2,653.2 557.1,651.4 558.0,651.5 558.9,650.7 559.8,653.1 560.7,651.3 561.6,651.9 562.5,653.2 563.4,651.4 564.3,652.0 565.2,651.2 566.1,652.6 567.0,652.7 567.9,651.6 568.8,651.6 569.7,650.9 570.6,652.7 571.5,648.5 572.4,651.5 573.3,653.0 574.2,649.7 575.1,652.0 576.0,651.9 576.9,651.8 577.8,652.5 578.7,652.9 579.6,651.0 580.5,651.5 581.4,651.7 582.3,651.2 583.2,651.3 584.1,653.0 585.0,651.5 585.9,653.3 586.8,651.3 587.7,652.4 588.6,651.0 589.5,652.8 590.4,651.1 591.3,651.0 592.2,653.2 593.1,653.1 594.0,653.0 594.9,651.4 595.8,650.8 596.7,652.3 597.6,651.7 598.5,651.2 599.4,652.3 600.3,649.2 601.2,652.5 602.1,651.5 603.0,652.8 603.9,648.8 604.8,652.1 605.7,650.9 606.6,652.5 607.5,651.4 608.4,653.2 609.3,652.2 610.2,651.8 611.1,653.3 612.0,651.2 612.9,648.4 613.8,651.8 614.7,651.8 615.6,651.9 616.5,650.7 617.4,652.4 618.3,650.9 619.2,651.7 620.1,651.1 621.0,652.1 621.9,651.0 622.8,652.8 623.7,651.2 624.6,653.2 625.5,649.1 626.4,651.7 627.3,652.3 628.2,651.1 629.1,651.3 630.0,652.9 630.9,651.2 631.8,651.7 632.7,651.7 633.6,651.3 634.5,650.7 635.4,649.9 636.3,651.0 637.2,652.1 638.1,651.5 639.0,652.2 639.9,652.4 640.8,649.4 641.7,652.0 642.6,652.7 643.5,651.9 644.4,650.2 645.3,649.7 646.2,649.6 647.1,650.9 648.0,652.7 648.9,650.8 649.8,651.7 650.7,651.1 651.6,653.3 652.5,652.8 653.4,653.3 654.3,653.2 655.2,651.1 656.1,651.1 657.0,652.7 657.9,653.0 658.8,652.8 659.7,652.0 660.6,651.2 661.5,652.0 662.4,650.8 663.3,651.1 664.2,652.5 665.1,651.1 666.0,651.0 666.9,652.4 667.8,653.0 668.7,652.2 669.6,651.0 670.5,652.3 671.4,652.8 672.3,653.3 673.2,651.6 674.1,651.8 675.0,649.9 675.9,651.4 676.8,653.3 677.7,652.4 678.6,649.0 679.5,652.3 680.4,652.0 681.3,651.0 682.2,650.9 683.1,649.6 684.0,651.3 684.9,652.2 685.8,652.3 686.7,651.1 687.6,651.3 688.5,650.9 689.4,653.0 690.3,651.7 691.2,650.7 692.1,652.2 693.0,652.4 693.9,653.1 694.8,651.3 695.7,650.8 696.6,651.8 697.5,650.9 698.4,650.7 699.3,653.1 700.2,651.2 701.1,652.0 702.0,652.8 702.9,651.5 703.8,650.8 704.7,652.7 705.6,650.7 706.5,652.6 707.4,652.6 708.3,649.4 709.2,650.8 710.1,652.6 711.0,652.9 711.9,651.4 712.8,651.8 713.7,652.1 714.6,652.4 715.5,651.3 716.4,650.7 717.3,651.3 718.2,653.2 719.1,651.5 720.0,651.6 720.9,653.1 721.8,652.5 722.7,653.2 723.6,652.9 724.5,652.9 725.4,652.6 726.3,651.5 727.2,649.5 728.1,649.4 729.0,653.1 729.9,649.5 730.8,652.5 731.7,652.5 732.6,650.9 733.5,651.6 734.4,652.8 735.3,650.9 736.2,653.1 737.1,651.0 738.0,648.2 738.9,652.8 739.8,652.8 740.7,649.8 741.6,652.7 742.5,651.5 743.4,650.8 744.3,651.4 745.2,651.7 746.1,653.2 747.0,652.9 747.9,650.8 748.8,651.8 749.7,651.6 750.6,652.1 751.5,650.2 752.4,649.3 753.3,652.7 754.2,650.7 755.1,652.0 756.0,651.2 756.9,651.6 757.8,651.4 758.7,651.4 759.6,652.5 760.5,651.0 761.4,650.9 762.3,652.5 763.2,652.3 764.1,651.7 765.0,650.2 765.9,650.8 766.8,651.4 767.7,652.0 768.6,653.0 769.5,651.9 770.4,652.7 771.3,652.4 772.2,651.5 773.1,652.9 774.0,652.6 774.9,651.8 775.8,652.2 776.7,651.9 777.6,651.3 778.5,651.5 779.4,652.9 780.3,651.1 781.2,651.5 782.1,651.1 783.0,651.2 783.9,649.7 784.8,651.0 785.7,653.3 786.6,652.6 787.5,651.2 788.4,651.0 789.3,649.6 790.2,652.8 791.1,652.0 792.0,651.9 792.9,652.3 793.8,652.6 794.7,651.8 795.6,652.6 796.5,651.3 797.4,653.0 798.3,652.5 799.2,652.5 800.1,651.9 801.0,650.2 801.9,652.7 802.8,652.3 803.7,651.8 804.6,652.3 805.5,652.5 806.4,651.2 807.3,652.7 808.2,652.0 809.1,650.8 810.0,651.1 810.9,653.1 811.8,651.0 812.7,652.1 813.6,652.0 814.5,652.9 815.4,651.8 816.3,651.2 817.2,651.7 818.1,651.0 819.0,649.7 819.9,649.6 820.8,651.8 821.7,651.6 822.6,651.3 823.5,653.1 824.4,651.3 825.3,651.7 826.2,651.0 827.1,652.8 828.0,651.9 828.9,651.3 829.8,651.6 830.7,652.8 831.6,651.9 832.5,652.1 833.4,652.9 834,638" fill="#375680"/></svg>
<div class="a" style="left:534px;top:618px;width:10px;height:8px;background:#7a7a7a;"></div>
<div class="t" style="left:535.5px;top:619.2px;font-size:7px;color:#2a2a2a;font-family:"Liberation Serif",serif"><i>fx</i></div>
<div class="a" style="left:560px;top:509px;width:1px;height:171px;background:#3d8de0;"></div>
<svg style="left:555px;top:509px" width="11" height="10"><path d="M1 0.5H10V7L7.5 9.5H3.5L1 7Z" fill="#3d8de0"/></svg>
<svg style="left:645px;top:509px" width="12" height="17"><path d="M0.5 0.5V13L3.6 10L6 15.5L8 14.6L5.7 9.4H10Z" fill="#fff" stroke="#111" stroke-width="0.8"/></svg>
<div class="a" style="left:1189px;top:530px;width:7px;height:77px;background:#2b2b2b;border-radius:3px"></div>
<div class="a" style="left:1189px;top:620px;width:7px;height:53px;background:#2b2b2b;border-radius:3px"></div>
<svg style="left:1186px;top:524px" width="14" height="155"><g stroke="#a8a8a8" stroke-width="1.8" fill="#232323"><circle cx="6.5" cy="6" r="3.5"/><circle cx="6.5" cy="82" r="3.5"/><circle cx="6.5" cy="96" r="3.5"/><circle cx="6.5" cy="148" r="3.5"/></g></svg>
<div class="a" style="left:339px;top:681px;width:851px;height:1px;background:#2c2c2c;"></div>
<div class="a" style="left:339px;top:689px;width:851px;height:1px;background:#2c2c2c;"></div>
<div class="a" style="left:350px;top:681px;width:90px;height:9px;background:#383838;border-radius:4px"></div>
<svg style="left:347px;top:680px" width="96" height="12"><g stroke="#a8a8a8" stroke-width="1.8" fill="#383838"><circle cx="6" cy="5.5" r="3.5"/><circle cx="89.5" cy="5.5" r="3.5"/></g></svg>
<svg style="left:1071px;top:631px" width="144" height="54" viewBox="0 0 144 54">
<rect width="144" height="54" fill="rgba(215,215,215,0.82)"/>
<g fill="#8b8b8b">
<path d="M9 42 Q13 22 29 13 Q35 10 43 9 V42 H36 V32 H24 L20 42Z M26 25 H36 V16 Q30 18 26 25Z"/>
<path d="M52 22 L59 20 V25 H65 V21 L72 19 V25 H75 V32 H72 V42 H65 V32 H59 V42 H52 V32 H46 V25 H52Z"/>
<path d="M77 31 Q77 19 89 19 Q101 19 101 31 V42 H94 V39 Q92 42 88 42 Q77 42 77 31Z M83.5 31 Q83.5 36.5 89 36.5 Q94.5 36.5 94.5 31 Q94.5 25.5 89 25.5 Q83.5 25.5 83.5 31Z"/>
<rect x="103" y="20" width="7" height="22"/><circle cx="107" cy="12" r="4"/>
<path d="M114 42 V31 Q114 19 125.5 19 Q137 19 137 31 V42 H130 V31 Q130 25.5 125.5 25.5 Q121 25.5 121 31 V42Z"/>
</g></svg>
<div class="a" style="left:1221px;top:483px;width:31px;height:190px;background:#1a1a1a;border:1px solid #2e2e2e"></div>
<div class="a" style="left:1221px;top:491px;width:31px;height:1px;background:#2e2e2e;"></div>
<div class="a" style="left:1236px;top:483px;width:1px;height:190px;background:#2e2e2e;"></div>
<svg style="left:1222px;top:522px" width="30" height="151"><defs><linearGradient id="gm" x1="0" y1="0" x2="0" y2="1"><stop offset="0" stop-color="#c6f05a"/><stop offset="0.12" stop-color="#5fe24a"/><stop offset="0.45" stop-color="#3fcf4a"/><stop offset="1" stop-color="#3a9a48"/></linearGradient></defs><rect x="0" y="0.5" width="14" height="150.5" fill="url(#gm)"/><rect x="15" y="13" width="14" height="138" fill="url(#gm)"/></svg>
<div class="a" style="left:1252px;top:491px;width:3px;height:1px;background:#8a8a8a;"></div>
<div class="a" style="left:1252px;top:494px;width:2px;height:1px;background:#8a8a8a;"></div>
<div class="a" style="left:1252px;top:497px;width:2px;height:1px;background:#8a8a8a;"></div>
<div class="a" style="left:1252px;top:500px;width:2px;height:1px;background:#8a8a8a;"></div>
<div class="a" style="left:1252px;top:503px;width:2px;height:1px;background:#8a8a8a;"></div>
<div class="a" style="left:1252px;top:506px;width:2px;height:1px;background:#8a8a8a;"></div>
<div class="a" style="left:1252px;top:509px;width:3px;height:1px;background:#8a8a8a;"></div>
<div class="a" style="left:1252px;top:512px;width:2px;height:1px;background:#8a8a8a;"></div>
<div class="a" style="left:1252px;top:515px;width:2px;height:1px;background:#8a8a8a;"></div>
<div class="a" style="left:1252px;top:518px;width:2px;height:1px;background:#8a8a8a;"></div>
<div class="a" style="left:1252px;top:521px;width:2px;height:1px;background:#8a8a8a;"></div>
<div class="a" style="left:1252px;top:524px;width:2px;height:1px;background:#8a8a8a;"></div>
<div class="a" style="left:1252px;top:527px;width:3px;height:1px;background:#8a8a8a;"></div>
<div class="a" style="left:1252px;top:530px;width:2px;height:1px;background:#8a8a8a;"></div>
<div class="a" style="left:1252px;top:533px;width:2px;height:1px;background:#8a8a8a;"></div>
<div class="a" style="left:1252px;top:536px;width:2px;height:1px;background:#8a8a8a;"></div>
<div class="a" style="left:1252px;top:539px;width:2px;height:1px;background:#8a8a8a;"></div>
<div class="a" style="left:1252px;top:543px;width:2px;height:1px;background:#8a8a8a;"></div>
<div class="a" style="left:1252px;top:546px;width:3px;height:1px;background:#8a8a8a;"></div>
<div class="a" style="left:1252px;top:549px;width:2px;height:1px;background:#8a8a8a;"></div>
<div class="a" style="left:1252px;top:552px;width:2px;height:1px;background:#8a8a8a;"></div>
<div class="a" style="left:1252px;top:555px;width:2px;height:1px;background:#8a8a8a;"></div>
<div class="a" style="left:1252px;top:558px;width:2px;height:1px;background:#8a8a8a;"></div>
<div class="a" style="left:1252px;top:561px;width:2px;height:1px;background:#8a8a8a;"></div>
<div class="a" style="left:1252px;top:564px;width:3px;height:1px;background:#8a8a8a;"></div>
<div class="a" style="left:1252px;top:567px;width:2px;height:1px;background:#8a8a8a;"></div>
<div class="a" style="left:1252px;top:570px;width:2px;height:1px;background:#8a8a8a;"></div>
<div class="a" style="left:1252px;top:573px;width:2px;height:1px;background:#8a8a8a;"></div>
<div class="a" style="left:1252px;top:576px;width:2px;height:1px;background:#8a8a8a;"></div>
<div class="a" style="left:1252px;top:579px;width:2px;height:1px;background:#8a8a8a;"></div>
<div class="a" style="left:1252px;top:582px;width:3px;height:1px;background:#8a8a8a;"></div>
<div class="a" style="left:1252px;top:585px;width:2px;height:1px;background:#8a8a8a;"></div>
<div class="a" style="left:1252px;top:588px;width:2px;height:1px;background:#8a8a8a;"></div>
<div class="a" style="left:1252px;top:591px;width:2px;height:1px;background:#8a8a8a;"></div>
<div class="a" style="left:1252px;top:594px;width:2px;height:1px;background:#8a8a8a;"></div>
<div class="a" style="left:1252px;top:597px;width:2px;height:1px;background:#8a8a8a;"></div>
<div class="a" style="left:1252px;top:600px;width:3px;height:1px;background:#8a8a8a;"></div>
<div class="a" style="left:1252px;top:603px;width:2px;height:1px;background:#8a8a8a;"></div>
<div class="a" style="left:1252px;top:606px;width:2px;height:1px;background:#8a8a8a;"></div>
<div class="a" style="left:1252px;top:609px;width:2px;height:1px;background:#8a8a8a;"></div>
<div class="a" style="left:1252px;top:612px;width:2px;height:1px;background:#8a8a8a;"></div>
<div class="a" style="left:1252px;top:615px;width:2px;height:1px;background:#8a8a8a;"></div>
<div class="a" style="left:1252px;top:618px;width:3px;height:1px;background:#8a8a8a;"></div>
<div class="a" style="left:1252px;top:621px;width:2px;height:1px;background:#8a8a8a;"></div>
<div class="a" style="left:1252px;top:624px;width:2px;height:1px;background:#8a8a8a;"></div>
<div class="a" style="left:1252px;top:627px;width:2px;height:1px;background:#8a8a8a;"></div>
<div class="a" style="left:1252px;top:630px;width:2px;height:1px;background:#8a8a8a;"></div>
<div class="a" style="left:1252px;top:633px;width:2px;height:1px;background:#8a8a8a;"></div>
<div class="a" style="left:1252px;top:636px;width:3px;height:1px;background:#8a8a8a;"></div>
<div class="a" style="left:1252px;top:639px;width:2px;height:1px;background:#8a8a8a;"></div>
<div class="a" style="left:1252px;top:642px;width:2px;height:1px;background:#8a8a8a;"></div>
<div class="a" style="left:1252px;top:646px;width:2px;height:1px;background:#8a8a8a;"></div>
<div class="a" style="left:1252px;top:649px;width:2px;height:1px;background:#8a8a8a;"></div>
<div class="a" style="left:1252px;top:652px;width:2px;height:1px;background:#8a8a8a;"></div>
<div class="a" style="left:1252px;top:655px;width:3px;height:1px;background:#8a8a8a;"></div>
<div class="a" style="left:1252px;top:658px;width:2px;height:1px;background:#8a8a8a;"></div>
<div class="a" style="left:1252px;top:661px;width:2px;height:1px;background:#8a8a8a;"></div>
<div class="a" style="left:1252px;top:664px;width:2px;height:1px;background:#8a8a8a;"></div>
<div class="a" style="left:1252px;top:667px;width:2px;height:1px;background:#8a8a8a;"></div>
<div class="a" style="left:1252px;top:670px;width:2px;height:1px;background:#8a8a8a;"></div>
<div class="t" style="left:1257px;top:487.7px;font-size:8px;color:#9a9a9a;">0</div>
<div class="t" style="left:1257px;top:505.6px;font-size:8px;color:#9a9a9a;">-6</div>
<div class="t" style="left:1257px;top:523.5px;font-size:8px;color:#9a9a9a;">-12</div>
<div class="t" style="left:1257px;top:541.4px;font-size:8px;color:#9a9a9a;">-18</div>
<div class="t" style="left:1257px;top:559.3px;font-size:8px;color:#9a9a9a;">-24</div>
<div class="t" style="left:1257px;top:577.2px;font-size:8px;color:#9a9a9a;">-30</div>
<div class="t" style="left:1257px;top:595.1px;font-size:8px;color:#9a9a9a;">-36</div>
<div class="t" style="left:1257px;top:613.0px;font-size:8px;color:#9a9a9a;">-42</div>
<div class="t" style="left:1257px;top:630.9px;font-size:8px;color:#9a9a9a;">-48</div>
<div class="t" style="left:1257px;top:648.8px;font-size:8px;color:#9a9a9a;">-54</div>
<div class="t" style="left:1257px;top:666.7px;font-size:8px;color:#9a9a9a;">dB</div>
<div class="a" style="left:1221px;top:677px;width:14px;height:14px;background:#1c1c1c;border:1px solid #2c2c2c"></div>
<div class="a" style="left:1236px;top:677px;width:14px;height:14px;background:#1c1c1c;border:1px solid #2c2c2c"></div>
<div class="t" style="left:1225px;top:680.5px;font-size:8.5px;color:#b8b8b8;font-weight:bold;">S</div>
<div class="t" style="left:1240px;top:680.5px;font-size:8.5px;color:#b8b8b8;font-weight:bold;">S</div>
<script>
(function(){var els=document.querySelectorAll('.f');for(var i=0;i<els.length;i++){var e=els[i];var W=parseFloat(e.style.getPropertyValue('--w'));e.style.transform='none';var r=e.getBoundingClientRect().width;if(r>0&&W>0){e.style.transform='scaleX('+(W/r)+')';}}})();
</script>
</body></html>
